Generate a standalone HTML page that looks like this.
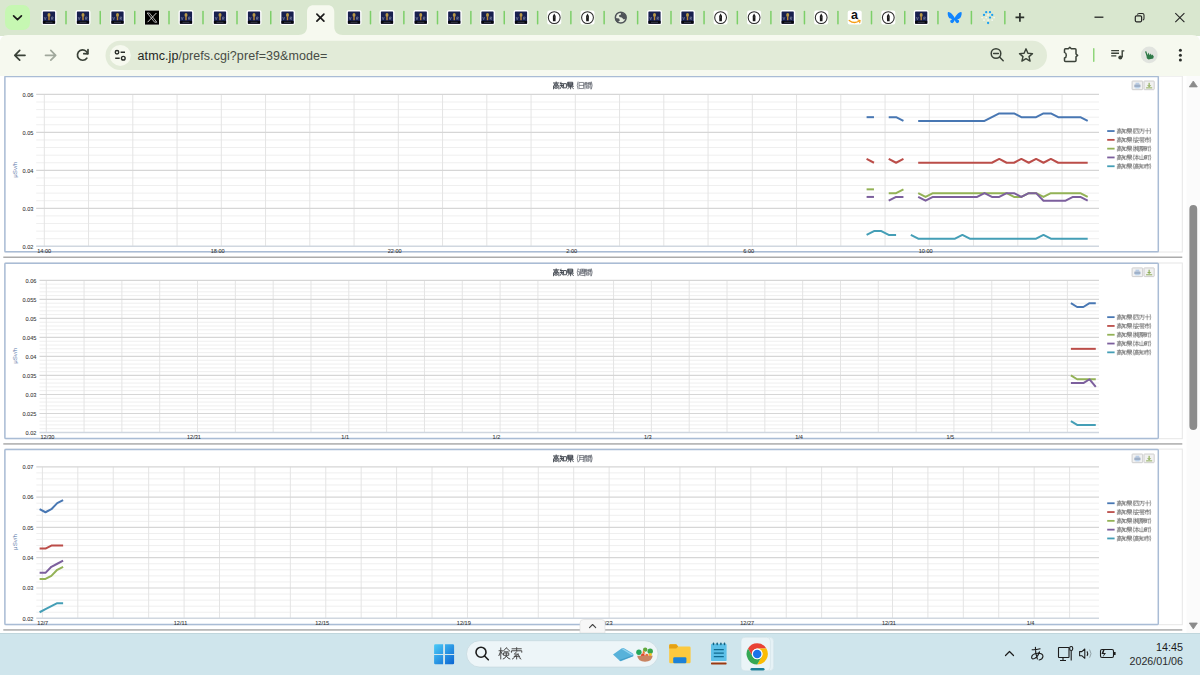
<!DOCTYPE html>
<html>
<head>
<meta charset="utf-8">
<style>
html,body{margin:0;padding:0;}
body{width:1200px;height:675px;overflow:hidden;position:relative;background:#fff;font-family:"Liberation Sans",sans-serif;}
.abs{position:absolute;}
#tabs{left:0;top:0;width:1200px;height:36px;background:#d9e7cf;}
#toolbar{left:0;top:35px;width:1200px;height:41px;background:#f6f9ef;border-radius:8px 8px 0 0;}
#content{left:0;top:76px;width:1200px;height:557px;background:#fff;overflow:hidden;}
#taskbar{left:0;top:633px;width:1200px;height:42px;overflow:hidden;}
svg text{font-family:"Liberation Sans",sans-serif;}
.tk{font-size:5.6px;fill:#3a3a3a;stroke:#3a3a3a;stroke-width:0.08px;}
.tt{font-size:7.4px;fill:#555;}
.yl{font-size:6.2px;fill:#5a78a8;}
.lg{font-size:5.6px;fill:#555;}
#url{left:138px;top:46px;font-size:14px;color:#1f1f1f;letter-spacing:0px;}
</style>
</head>
<body>
<div id="top" class="abs" style="left:0;top:0;width:1200px;height:76px"><svg width="1200" height="76" style="position:absolute;left:0;top:0">
<defs>
<g id="ic-v"><rect x="-7.5" y="-7.5" width="15" height="15" rx="2.5" fill="#fff"/><rect x="-6.1" y="-6.1" width="12.2" height="12.2" rx="0.6" fill="#18204f"/><rect x="-6.1" y="3.3" width="12.2" height="2.8" fill="#07070d"/><path d="M-3.5,4.7 L3.5,4.7" stroke="#6a7090" stroke-width="0.5"/><ellipse cx="0" cy="-2.6" rx="1.5" ry="1.9" fill="#b89848"/><rect x="-0.7" y="-1" width="1.4" height="3.6" fill="#c08a38"/><path d="M-4.8,-0.6 L-3.8,2.2 L-2.8,-0.6 M2.6,-0.6 L2.6,2.2 M2.6,-0.6 L4.1,-0.6 L4.1,0.8 L2.6,0.8 L4.3,2.2" stroke="#7c84a0" stroke-width="0.65" fill="none"/></g>
<g id="ic-x"><rect x="-7.5" y="-7.5" width="15" height="15" fill="#fff" opacity="0.7"/><rect x="-7" y="-7" width="14" height="14" fill="#000"/>
<path d="M-4.8,-4.6 L-2.6,-4.6 L4.8,4.6 L2.6,4.6 Z" fill="none" stroke="#ddd" stroke-width="0.8"/><path d="M4.4,-4.6 L-4.4,4.6" stroke="#ddd" stroke-width="0.9"/></g>
<g id="ic-p"><rect x="-7" y="-7" width="14" height="14" rx="2" fill="#fff"/><circle r="5.9" fill="none" stroke="#2a2a2a" stroke-width="1.05"/><path d="M0,-4.2 L1.4,-1.6 L1.3,3.6 L-1.3,3.6 L-1.4,-1.6 Z" fill="#1a1a1a"/><circle cx="0" cy="-0.6" r="0.45" fill="#888"/></g>
<g id="ic-g"><circle r="5.4" fill="#e4ecdc" stroke="#4f5458" stroke-width="1.5"/><path d="M0,-5.3 L5.4,-2.8 L5.6,0.9 L3,1.9 L1,0 L-1.4,-0.5 L-1.7,-2.4 L0.2,-3.2 Z" fill="#4f5458"/><path d="M-5.8,0.4 L-1.6,0.8 L-0.9,2.9 L-2.6,4.2 L-2.8,5.6 Q-5.4,4.2 -5.8,0.4 Z" fill="#4f5458"/></g>
<g id="ic-a"><rect x="-7" y="-7" width="14" height="14" rx="2" fill="#fff"/><text x="-0.3" y="1.1" text-anchor="middle" font-size="12.5" font-weight="bold" fill="#111" font-family="Liberation Sans">a</text><path d="M-5.5,2.8 Q-0.5,6.8 5,3.2" stroke="#f59d12" stroke-width="1.3" fill="none" stroke-linecap="round"/><path d="M3.2,2.4 L5.3,2.9 L5,5" stroke="#f59d12" stroke-width="1.1" fill="none" stroke-linecap="round"/></g>
<g id="ic-b"><path d="M0,0.5 C-1.5,-3 -5,-6 -6.5,-5.5 C-7.5,-5 -6.8,-1 -5.5,0.5 C-4.5,1.5 -3.5,1.5 -2.5,1.6 C-5,2.5 -5,4.5 -3,5.5 C-1.5,6 -0.5,4 0,2.5 C0.5,4 1.5,6 3,5.5 C5,4.5 5,2.5 2.5,1.6 C3.5,1.5 4.5,1.5 5.5,0.5 C6.8,-1 7.5,-5 6.5,-5.5 C5,-6 1.5,-3 0,0.5Z" fill="#1185fe"/></g>
<g id="ic-d"><circle cx="-1.9" cy="-5.4" r="1.15" fill="#1aa0f2"/><circle cx="1.9" cy="-5.4" r="1.15" fill="#1aa0f2"/><circle cx="-4.1" cy="-2.7" r="1.15" fill="#1aa0f2"/><circle cx="4.1" cy="-2.7" r="1.15" fill="#1aa0f2"/><circle cx="1.9" cy="0" r="1.15" fill="#1aa0f2"/><circle cx="0" cy="5.4" r="1.15" fill="#1aa0f2"/><circle cx="-6" cy="0" r="0.9" fill="#f4f8f0"/><circle cx="-1.9" cy="0" r="0.9" fill="#f4f8f0"/><circle cx="6" cy="0" r="0.9" fill="#f4f8f0"/><circle cx="-4.1" cy="2.5" r="0.9" fill="#f4f8f0"/><circle cx="0" cy="2.5" r="0.9" fill="#f4f8f0"/><circle cx="4.1" cy="2.5" r="0.9" fill="#f4f8f0"/><circle cx="0" cy="-2.7" r="0.9" fill="#f4f8f0"/></g>
</defs>
<rect x="0" y="0" width="1200" height="36" fill="#d9e7cf"/>
<rect x="5" y="5" width="25" height="25" rx="7" fill="#c6f7b2"/>
<path d="M13.6,15.8 L17.5,19.6 L21.4,15.8" stroke="#1b1b1b" stroke-width="1.7" fill="none" stroke-linecap="round" stroke-linejoin="round"/>
<rect x="65.25" y="10.7" width="1.5" height="13.8" rx="0.7" fill="#7ccf68"/>
<rect x="99.50" y="10.7" width="1.5" height="13.8" rx="0.7" fill="#7ccf68"/>
<rect x="134.00" y="10.7" width="1.5" height="13.8" rx="0.7" fill="#7ccf68"/>
<rect x="168.25" y="10.7" width="1.5" height="13.8" rx="0.7" fill="#7ccf68"/>
<rect x="202.25" y="10.7" width="1.5" height="13.8" rx="0.7" fill="#7ccf68"/>
<rect x="236.25" y="10.7" width="1.5" height="13.8" rx="0.7" fill="#7ccf68"/>
<rect x="270.00" y="10.7" width="1.5" height="13.8" rx="0.7" fill="#7ccf68"/>
<rect x="369.75" y="10.7" width="1.5" height="13.8" rx="0.7" fill="#7ccf68"/>
<rect x="403.12" y="10.7" width="1.5" height="13.8" rx="0.7" fill="#7ccf68"/>
<rect x="436.75" y="10.7" width="1.5" height="13.8" rx="0.7" fill="#7ccf68"/>
<rect x="470.12" y="10.7" width="1.5" height="13.8" rx="0.7" fill="#7ccf68"/>
<rect x="503.50" y="10.7" width="1.5" height="13.8" rx="0.7" fill="#7ccf68"/>
<rect x="536.88" y="10.7" width="1.5" height="13.8" rx="0.7" fill="#7ccf68"/>
<rect x="570.12" y="10.7" width="1.5" height="13.8" rx="0.7" fill="#7ccf68"/>
<rect x="603.38" y="10.7" width="1.5" height="13.8" rx="0.7" fill="#7ccf68"/>
<rect x="636.88" y="10.7" width="1.5" height="13.8" rx="0.7" fill="#7ccf68"/>
<rect x="670.25" y="10.7" width="1.5" height="13.8" rx="0.7" fill="#7ccf68"/>
<rect x="703.30" y="10.7" width="1.5" height="13.8" rx="0.7" fill="#7ccf68"/>
<rect x="736.60" y="10.7" width="1.5" height="13.8" rx="0.7" fill="#7ccf68"/>
<rect x="770.15" y="10.7" width="1.5" height="13.8" rx="0.7" fill="#7ccf68"/>
<rect x="803.70" y="10.7" width="1.5" height="13.8" rx="0.7" fill="#7ccf68"/>
<rect x="837.20" y="10.7" width="1.5" height="13.8" rx="0.7" fill="#7ccf68"/>
<rect x="870.75" y="10.7" width="1.5" height="13.8" rx="0.7" fill="#7ccf68"/>
<rect x="904.00" y="10.7" width="1.5" height="13.8" rx="0.7" fill="#7ccf68"/>
<rect x="937.20" y="10.7" width="1.5" height="13.8" rx="0.7" fill="#7ccf68"/>
<rect x="970.65" y="10.7" width="1.5" height="13.8" rx="0.7" fill="#7ccf68"/>
<rect x="1004.10" y="10.7" width="1.5" height="13.8" rx="0.7" fill="#7ccf68"/>
<path d="M298.5,35 C303.5,35 307,32 307,27 L307,12 C307,8 309.5,5.3 313.5,5.3 L327.8,5.3 C331.8,5.3 334.3,8 334.3,12 L334.3,27 C334.3,32 337.8,35 342.8,35 Z" fill="#f6f9ef"/>
<path d="M316.9,14.1 L323.9,21.1 M323.9,14.1 L316.9,21.1" stroke="#1b1b1b" stroke-width="1.7" stroke-linecap="round"/>
<use href="#ic-v" x="49" y="17.6"/>
<use href="#ic-v" x="83" y="17.6"/>
<use href="#ic-v" x="117.5" y="17.6"/>
<use href="#ic-x" x="152" y="17.6"/>
<use href="#ic-v" x="186" y="17.6"/>
<use href="#ic-v" x="220" y="17.6"/>
<use href="#ic-v" x="254" y="17.6"/>
<use href="#ic-v" x="287.5" y="17.6"/>
<use href="#ic-v" x="354" y="17.6"/>
<use href="#ic-v" x="387" y="17.6"/>
<use href="#ic-v" x="420.75" y="17.6"/>
<use href="#ic-v" x="454.25" y="17.6"/>
<use href="#ic-v" x="487.5" y="17.6"/>
<use href="#ic-v" x="521" y="17.6"/>
<use href="#ic-p" x="554.25" y="17.6"/>
<use href="#ic-p" x="587.5" y="17.6"/>
<use href="#ic-g" x="620.75" y="17.6"/>
<use href="#ic-v" x="654.5" y="17.6"/>
<use href="#ic-v" x="687.5" y="17.6"/>
<use href="#ic-p" x="720.6" y="17.6"/>
<use href="#ic-p" x="754.1" y="17.6"/>
<use href="#ic-v" x="787.7" y="17.6"/>
<use href="#ic-p" x="821.2" y="17.6"/>
<use href="#ic-a" x="854.7" y="17.6"/>
<use href="#ic-p" x="888.3" y="17.6"/>
<use href="#ic-v" x="921.2" y="17.6"/>
<use href="#ic-b" x="954.7" y="17.6"/>
<use href="#ic-d" x="988.1" y="17.6"/>
<path d="M1019.9,13.1 L1019.9,21.8 M1015.5,17.45 L1024.2,17.45" stroke="#2b302b" stroke-width="1.7"/>
<path d="M1094.5,17.2 L1103.4,17.2" stroke="#252525" stroke-width="1.3"/>
<rect x="1135.3" y="15.9" width="6.3" height="5.9" rx="1.2" fill="none" stroke="#252525" stroke-width="1.2"/><path d="M1137.3,14.7 Q1137.6,13.4 1139.2,13.4 L1142.4,13.4 Q1144,13.4 1144,15 L1144,18.4 Q1144,19.9 1142.8,20.1" stroke="#252525" stroke-width="1.05" fill="none"/>
<path d="M1175.3,13.2 L1184.4,22.1 M1184.4,13.2 L1175.3,22.1" stroke="#252525" stroke-width="1.1"/>
<path d="M0,76 L0,43 Q0,35 8,35 L1192,35 Q1200,35 1200,43 L1200,76 Z" fill="#f6f9ef"/>
<rect x="105.5" y="40.8" width="941.5" height="29.2" rx="14.6" fill="#e2ebd8"/>
<circle cx="120.3" cy="55.4" r="10.5" fill="#f6f9ef"/>
<g stroke="#2b2f2b" stroke-width="1.4" fill="none"><circle cx="117" cy="52.3" r="1.75"/><path d="M120.6,52.3 L125,52.3 M115.2,58.2 L119.7,58.2"/><circle cx="123.3" cy="58.2" r="1.85"/></g>
<text x="137.6" y="59.8" font-size="12.5" textLength="189.8" lengthAdjust="spacing" font-family="Liberation Sans" fill="#474b45"><tspan fill="#1f1f1f">atmc.jp</tspan>/prefs.cgi?pref=39&amp;mode=</text>
<path d="M25,55.3 L14.8,55.3 M19.7,50.4 L14.8,55.3 L19.7,60.2" stroke="#3a4238" stroke-width="1.7" fill="none" stroke-linecap="round" stroke-linejoin="round"/>
<path d="M45.5,55.3 L55.7,55.3 M50.8,50.4 L55.7,55.3 L50.8,60.2" stroke="#a0a89c" stroke-width="1.7" fill="none" stroke-linecap="round" stroke-linejoin="round"/>
<path d="M87.6,53.4 A5.2,5.2 0 1 0 86.8,58.2" stroke="#3a4238" stroke-width="1.7" fill="none" stroke-linecap="round"/><path d="M88,49.6 L87.9,53.9 L83.8,53.7" stroke="#3a4238" stroke-width="1.7" fill="none" stroke-linecap="round" stroke-linejoin="round"/>
<g stroke="#3a4238" stroke-width="1.5" fill="none" stroke-linecap="round"><circle cx="996" cy="53.5" r="4.8"/><path d="M993.6,53.5 L998.4,53.5 M999.5,57 L1003.2,60.8"/></g>
<path d="M1026,48.8 L1027.9,53.2 L1032.5,53.6 L1029,56.6 L1030.1,61.1 L1026,58.7 L1021.9,61.1 L1023,56.6 L1019.5,53.6 L1024.1,53.2 Z" fill="none" stroke="#3a4238" stroke-width="1.4" stroke-linejoin="round"/>
<path d="M1065.5,48.8 L1068.3,48.8 L1069.8,47.3 L1071.3,48.8 L1075,48.8 Q1076,48.8 1076,49.8 L1076,54 L1077.6,55.4 L1076,56.8 L1076,60.6 Q1076,61.6 1075,61.6 L1065.5,61.6 Q1064.5,61.6 1064.5,60.6 L1064.5,58 Q1066.3,57.5 1066.3,55.2 Q1066.3,52.9 1064.5,52.4 L1064.5,49.8 Q1064.5,48.8 1065.5,48.8 Z" fill="none" stroke="#3a4238" stroke-width="1.5" stroke-linejoin="round"/>
<rect x="1093" y="48" width="1.5" height="14" rx="0.7" fill="#8fd67a"/>
<g stroke="#3a4238" stroke-width="1.4" fill="none"><path d="M1111.2,50.6 L1119,50.6 M1111.2,53.25 L1119,53.25 M1111.2,55.9 L1116.3,55.9 M1122.2,57.2 L1122.2,50.9 L1124.3,50.9"/></g><circle cx="1120.3" cy="57.5" r="2" fill="#3a4238"/>
<circle cx="1149.25" cy="54.9" r="8.4" fill="#e1e4df"/><path d="M1145,51.6 L1146.3,51.2 L1147.6,55 L1148.6,52.6 L1149.6,55.2 L1150.8,53.6 L1151.6,55.6 L1152.4,54.6 L1153.8,56.6 L1153.2,58.6 L1148.6,59.4 L1147,58.6 Z" fill="#2f7a48"/><path d="M1144.6,52.8 L1146.2,56.5" stroke="#e8ece6" stroke-width="0.7"/>
<circle cx="1180.4" cy="50.3" r="1.5" fill="#2b2f2b"/><circle cx="1180.4" cy="55.15" r="1.5" fill="#2b2f2b"/><circle cx="1180.4" cy="60" r="1.5" fill="#2b2f2b"/>
</svg></div>
<div id="content" class="abs">
<svg width="1200" height="557" viewBox="0 76 1200 557" style="position:absolute;left:0;top:0">
<rect x="4.9" y="76.10000000000001" width="1177.4" height="175.89999999999998" fill="#fff" stroke="#e6e6e6" stroke-width="1"/>
<rect x="4.9" y="76.4" width="1153.3999999999999" height="175.29999999999998" rx="0.8" fill="#fff" stroke="#a9bcd5" stroke-width="1.5"/>
<line x1="36.2" y1="238.71" x2="1099" y2="238.71" stroke="#efefef" stroke-width="1"/>
<line x1="36.2" y1="231.11" x2="1099" y2="231.11" stroke="#efefef" stroke-width="1"/>
<line x1="36.2" y1="223.51" x2="1099" y2="223.51" stroke="#efefef" stroke-width="1"/>
<line x1="36.2" y1="215.92" x2="1099" y2="215.92" stroke="#efefef" stroke-width="1"/>
<line x1="36.2" y1="200.73" x2="1099" y2="200.73" stroke="#efefef" stroke-width="1"/>
<line x1="36.2" y1="193.13" x2="1099" y2="193.13" stroke="#efefef" stroke-width="1"/>
<line x1="36.2" y1="185.54" x2="1099" y2="185.54" stroke="#efefef" stroke-width="1"/>
<line x1="36.2" y1="177.94" x2="1099" y2="177.94" stroke="#efefef" stroke-width="1"/>
<line x1="36.2" y1="162.76" x2="1099" y2="162.76" stroke="#efefef" stroke-width="1"/>
<line x1="36.2" y1="155.16" x2="1099" y2="155.16" stroke="#efefef" stroke-width="1"/>
<line x1="36.2" y1="147.56" x2="1099" y2="147.56" stroke="#efefef" stroke-width="1"/>
<line x1="36.2" y1="139.97" x2="1099" y2="139.97" stroke="#efefef" stroke-width="1"/>
<line x1="36.2" y1="124.78" x2="1099" y2="124.78" stroke="#efefef" stroke-width="1"/>
<line x1="36.2" y1="117.18" x2="1099" y2="117.18" stroke="#efefef" stroke-width="1"/>
<line x1="36.2" y1="109.59" x2="1099" y2="109.59" stroke="#efefef" stroke-width="1"/>
<line x1="36.2" y1="102" x2="1099" y2="102" stroke="#efefef" stroke-width="1"/>
<line x1="44.3" y1="94.4" x2="44.3" y2="246.3" stroke="#e4e4e4" stroke-width="1"/>
<line x1="88.55" y1="94.4" x2="88.55" y2="246.3" stroke="#e4e4e4" stroke-width="1"/>
<line x1="132.8" y1="94.4" x2="132.8" y2="246.3" stroke="#e4e4e4" stroke-width="1"/>
<line x1="177.05" y1="94.4" x2="177.05" y2="246.3" stroke="#e4e4e4" stroke-width="1"/>
<line x1="221.3" y1="94.4" x2="221.3" y2="246.3" stroke="#e4e4e4" stroke-width="1"/>
<line x1="265.55" y1="94.4" x2="265.55" y2="246.3" stroke="#e4e4e4" stroke-width="1"/>
<line x1="309.8" y1="94.4" x2="309.8" y2="246.3" stroke="#e4e4e4" stroke-width="1"/>
<line x1="354.05" y1="94.4" x2="354.05" y2="246.3" stroke="#e4e4e4" stroke-width="1"/>
<line x1="398.3" y1="94.4" x2="398.3" y2="246.3" stroke="#e4e4e4" stroke-width="1"/>
<line x1="442.55" y1="94.4" x2="442.55" y2="246.3" stroke="#e4e4e4" stroke-width="1"/>
<line x1="486.8" y1="94.4" x2="486.8" y2="246.3" stroke="#e4e4e4" stroke-width="1"/>
<line x1="531.05" y1="94.4" x2="531.05" y2="246.3" stroke="#e4e4e4" stroke-width="1"/>
<line x1="575.3" y1="94.4" x2="575.3" y2="246.3" stroke="#e4e4e4" stroke-width="1"/>
<line x1="619.55" y1="94.4" x2="619.55" y2="246.3" stroke="#e4e4e4" stroke-width="1"/>
<line x1="663.8" y1="94.4" x2="663.8" y2="246.3" stroke="#e4e4e4" stroke-width="1"/>
<line x1="708.05" y1="94.4" x2="708.05" y2="246.3" stroke="#e4e4e4" stroke-width="1"/>
<line x1="752.3" y1="94.4" x2="752.3" y2="246.3" stroke="#e4e4e4" stroke-width="1"/>
<line x1="796.55" y1="94.4" x2="796.55" y2="246.3" stroke="#e4e4e4" stroke-width="1"/>
<line x1="840.8" y1="94.4" x2="840.8" y2="246.3" stroke="#e4e4e4" stroke-width="1"/>
<line x1="885.05" y1="94.4" x2="885.05" y2="246.3" stroke="#e4e4e4" stroke-width="1"/>
<line x1="929.3" y1="94.4" x2="929.3" y2="246.3" stroke="#e4e4e4" stroke-width="1"/>
<line x1="973.55" y1="94.4" x2="973.55" y2="246.3" stroke="#e4e4e4" stroke-width="1"/>
<line x1="1017.8" y1="94.4" x2="1017.8" y2="246.3" stroke="#e4e4e4" stroke-width="1"/>
<line x1="1062.05" y1="94.4" x2="1062.05" y2="246.3" stroke="#e4e4e4" stroke-width="1"/>
<line x1="36.2" y1="246.3" x2="1099" y2="246.3" stroke="#d0d7e0" stroke-width="1.5"/>
<text x="33.4" y="248.5" text-anchor="end" class="tk">0.02</text>
<line x1="36.2" y1="208.33" x2="1099" y2="208.33" stroke="#d6d6d6" stroke-width="1.2"/>
<text x="33.4" y="210.53" text-anchor="end" class="tk">0.03</text>
<line x1="36.2" y1="170.35" x2="1099" y2="170.35" stroke="#d6d6d6" stroke-width="1.2"/>
<text x="33.4" y="172.55" text-anchor="end" class="tk">0.04</text>
<line x1="36.2" y1="132.37" x2="1099" y2="132.37" stroke="#d6d6d6" stroke-width="1.2"/>
<text x="33.4" y="134.57" text-anchor="end" class="tk">0.05</text>
<line x1="36.2" y1="94.4" x2="1099" y2="94.4" stroke="#d6d6d6" stroke-width="1.2"/>
<text x="33.4" y="96.6" text-anchor="end" class="tk">0.06</text>
<text x="44.15" y="252.6" text-anchor="middle" class="tk">14:00</text>
<text x="217.7" y="252.6" text-anchor="middle" class="tk">18:00</text>
<text x="394.7" y="252.6" text-anchor="middle" class="tk">22:00</text>
<text x="571.7" y="252.6" text-anchor="middle" class="tk">2:00</text>
<text x="748.7" y="252.6" text-anchor="middle" class="tk">6:00</text>
<text x="925.7" y="252.6" text-anchor="middle" class="tk">10:00</text>
<g fill="none" stroke="#3a3f48" stroke-linecap="round" stroke-linejoin="round"><path d="M1,1.5 L9,1.5 M5,0 L5,1.5 M3,2.8 L7,2.8 L7,4.3 L3,4.3 Z M1.2,10 L1.2,5.5 L8.8,5.5 L8.8,10 M3.5,7 L6.5,7 L6.5,9 L3.5,9 Z" transform="translate(552.70,81.90) scale(0.7000)" stroke-width="1.286"/><path d="M1.5,0.5 L0.8,3 M1,2.5 L4.5,2.5 M0.3,5.2 L4.8,5.2 M2.7,2.5 L2.7,5.5 L0.5,9.5 M2.8,6 L4.5,9 M5.8,2.5 L9.3,2.5 L9.3,8.5 L5.8,8.5 Z" transform="translate(559.90,81.90) scale(0.7000)" stroke-width="1.286"/><path d="M2,0.5 L8,0.5 L8,5 L2,5 Z M2,2 L8,2 M2,3.5 L8,3.5 M1,0.5 L1,6.3 L9,6.3 M5,6.3 L5,10 M3.5,7.5 L1,9.5 M6.5,7.5 L9,9.5" transform="translate(567.10,81.90) scale(0.7000)" stroke-width="1.286"/></g>
<g fill="none" stroke="#5a5f68" stroke-linecap="round" stroke-linejoin="round"><path d="M577.94,81.90 Q576.40,85.40 577.94,88.90" stroke-width="0.700"/><path d="M2,0.8 L8,0.8 L8,9.5 L2,9.5 Z M2,5 L8,5" transform="translate(578.04,81.90) scale(0.7000)" stroke-width="1.000"/><path d="M0.8,10 L0.8,0.8 L4,0.8 L4,4 L0.8,4 M0.8,2.4 L4,2.4 M9.2,10 L9.2,0.8 L6,0.8 L6,4 L9.2,4 M6,2.4 L9.2,2.4 M3.3,5.5 L6.7,5.5 L6.7,9 L3.3,9 Z M3.3,7.2 L6.7,7.2" transform="translate(584.36,81.90) scale(0.7000)" stroke-width="1.000"/><path d="M591.46,81.90 Q593.00,85.40 591.46,88.90" stroke-width="0.700"/></g>
<text x="0" y="0" transform="translate(17.1,169.75) rotate(-90)" text-anchor="middle" class="yl">μSv/h</text>
<polyline points="866.6,117.18 873.97,117.18" fill="none" stroke="#4877b3" stroke-width="2" stroke-linejoin="round"/>
<polyline points="888.71,117.18 896.08,117.18 903.45,120.98" fill="none" stroke="#4877b3" stroke-width="2" stroke-linejoin="round"/>
<polyline points="918.19,120.98 925.56,120.98 932.93,120.98 940.3,120.98 947.67,120.98 955.04,120.98 962.41,120.98 969.78,120.98 977.15,120.98 984.52,120.98 991.89,117.18 999.26,113.39 1006.63,113.39 1014,113.39 1021.37,117.18 1028.74,117.18 1036.11,117.18 1043.48,113.39 1050.85,113.39 1058.22,117.18 1065.59,117.18 1072.96,117.18 1080.33,117.18 1087.7,120.98" fill="none" stroke="#4877b3" stroke-width="2" stroke-linejoin="round"/>
<polyline points="866.6,158.96 873.97,162.75" fill="none" stroke="#bb4d49" stroke-width="2" stroke-linejoin="round"/>
<polyline points="888.71,158.96 896.08,162.75 903.45,158.96" fill="none" stroke="#bb4d49" stroke-width="2" stroke-linejoin="round"/>
<polyline points="918.19,162.75 925.56,162.75 932.93,162.75 940.3,162.75 947.67,162.75 955.04,162.75 962.41,162.75 969.78,162.75 977.15,162.75 984.52,162.75 991.89,162.75 999.26,158.96 1006.63,162.75 1014,162.75 1021.37,158.96 1028.74,162.75 1036.11,158.96 1043.48,162.75 1050.85,158.96 1058.22,162.75 1065.59,162.75 1072.96,162.75 1080.33,162.75 1087.7,162.75" fill="none" stroke="#bb4d49" stroke-width="2" stroke-linejoin="round"/>
<polyline points="866.6,189.34 873.97,189.34" fill="none" stroke="#93b256" stroke-width="2" stroke-linejoin="round"/>
<polyline points="888.71,193.13 896.08,193.13 903.45,189.34" fill="none" stroke="#93b256" stroke-width="2" stroke-linejoin="round"/>
<polyline points="918.19,193.13 925.56,196.93 932.93,193.13 940.3,193.13 947.67,193.13 955.04,193.13 962.41,193.13 969.78,193.13 977.15,193.13 984.52,193.13 991.89,193.13 999.26,193.13 1006.63,193.13 1014,196.93 1021.37,196.93 1028.74,193.13 1036.11,193.13 1043.48,196.93 1050.85,193.13 1058.22,193.13 1065.59,193.13 1072.96,193.13 1080.33,193.13 1087.7,196.93" fill="none" stroke="#93b256" stroke-width="2" stroke-linejoin="round"/>
<polyline points="866.6,196.93 873.97,196.93" fill="none" stroke="#7c5f9d" stroke-width="2" stroke-linejoin="round"/>
<polyline points="888.71,200.73 896.08,196.93 903.45,196.93" fill="none" stroke="#7c5f9d" stroke-width="2" stroke-linejoin="round"/>
<polyline points="918.19,196.93 925.56,200.73 932.93,196.93 940.3,196.93 947.67,196.93 955.04,196.93 962.41,196.93 969.78,196.93 977.15,196.93 984.52,193.13 991.89,196.93 999.26,196.93 1006.63,193.13 1014,193.13 1021.37,196.93 1028.74,193.13 1036.11,193.13 1043.48,200.73 1050.85,200.73 1058.22,200.73 1065.59,200.73 1072.96,196.93 1080.33,196.93 1087.7,200.73" fill="none" stroke="#7c5f9d" stroke-width="2" stroke-linejoin="round"/>
<polyline points="866.6,234.91 873.97,231.11 881.34,231.11 888.71,234.91 896.08,234.91" fill="none" stroke="#449eb6" stroke-width="2" stroke-linejoin="round"/>
<polyline points="910.82,234.91 918.19,238.71 925.56,238.71 932.93,238.71 940.3,238.71 947.67,238.71 955.04,238.71 962.41,234.91 969.78,238.71 977.15,238.71 984.52,238.71 991.89,238.71 999.26,238.71 1006.63,238.71 1014,238.71 1021.37,238.71 1028.74,238.71 1036.11,238.71 1043.48,234.91 1050.85,238.71 1058.22,238.71 1065.59,238.71 1072.96,238.71 1080.33,238.71 1087.7,238.71" fill="none" stroke="#449eb6" stroke-width="2" stroke-linejoin="round"/>
<line x1="1107.2" y1="131.05" x2="1114.6" y2="131.05" stroke="#4877b3" stroke-width="1.8"/>
<g fill="none" stroke="#626262" stroke-linecap="round" stroke-linejoin="round"><path d="M1,1.5 L9,1.5 M5,0 L5,1.5 M3,2.8 L7,2.8 L7,4.3 L3,4.3 Z M1.2,10 L1.2,5.5 L8.8,5.5 L8.8,10 M3.5,7 L6.5,7 L6.5,9 L3.5,9 Z" transform="translate(1116.75,128.35) scale(0.5300)" stroke-width="1.038"/><path d="M1.5,0.5 L0.8,3 M1,2.5 L4.5,2.5 M0.3,5.2 L4.8,5.2 M2.7,2.5 L2.7,5.5 L0.5,9.5 M2.8,6 L4.5,9 M5.8,2.5 L9.3,2.5 L9.3,8.5 L5.8,8.5 Z" transform="translate(1121.94,128.35) scale(0.5300)" stroke-width="1.038"/><path d="M2,0.5 L8,0.5 L8,5 L2,5 Z M2,2 L8,2 M2,3.5 L8,3.5 M1,0.5 L1,6.3 L9,6.3 M5,6.3 L5,10 M3.5,7.5 L1,9.5 M6.5,7.5 L9,9.5" transform="translate(1127.13,128.35) scale(0.5300)" stroke-width="1.038"/><path d="M1133.85,128.35 Q1132.68,131.00 1133.85,133.65" stroke-width="0.550"/><path d="M1,1 L9,1 L9,9 L1,9 Z M3.8,1 Q3.8,5 2,6.5 M6,1 L6,5.5 Q6,6.5 8,6.5" transform="translate(1134.20,128.35) scale(0.5300)" stroke-width="1.038"/><path d="M0.5,1.5 L9.5,1.5 M4,1.5 L3.5,5 Q2.5,8.5 0.5,10 M3.7,4.5 L8.5,4.5 Q8.5,9 7.5,10 L6,9.5" transform="translate(1139.39,128.35) scale(0.5300)" stroke-width="1.038"/><path d="M0.5,4.5 L9.5,4.5 M5,0.3 L5,10" transform="translate(1144.58,128.35) scale(0.5300)" stroke-width="1.038"/><path d="M1150.24,128.35 Q1151.40,131.00 1150.24,133.65" stroke-width="0.550"/></g>
<line x1="1107.2" y1="139.85" x2="1114.6" y2="139.85" stroke="#bb4d49" stroke-width="1.8"/>
<g fill="none" stroke="#626262" stroke-linecap="round" stroke-linejoin="round"><path d="M1,1.5 L9,1.5 M5,0 L5,1.5 M3,2.8 L7,2.8 L7,4.3 L3,4.3 Z M1.2,10 L1.2,5.5 L8.8,5.5 L8.8,10 M3.5,7 L6.5,7 L6.5,9 L3.5,9 Z" transform="translate(1116.75,137.15) scale(0.5300)" stroke-width="1.038"/><path d="M1.5,0.5 L0.8,3 M1,2.5 L4.5,2.5 M0.3,5.2 L4.8,5.2 M2.7,2.5 L2.7,5.5 L0.5,9.5 M2.8,6 L4.5,9 M5.8,2.5 L9.3,2.5 L9.3,8.5 L5.8,8.5 Z" transform="translate(1121.94,137.15) scale(0.5300)" stroke-width="1.038"/><path d="M2,0.5 L8,0.5 L8,5 L2,5 Z M2,2 L8,2 M2,3.5 L8,3.5 M1,0.5 L1,6.3 L9,6.3 M5,6.3 L5,10 M3.5,7.5 L1,9.5 M6.5,7.5 L9,9.5" transform="translate(1127.13,137.15) scale(0.5300)" stroke-width="1.038"/><path d="M1133.85,137.15 Q1132.68,139.80 1133.85,142.45" stroke-width="0.550"/><path d="M5,0 L5,1.3 M1,3.5 L1,1.8 L9,1.8 L9,3.5 M0.5,6 L9.5,6 M4,3.5 Q3.5,6 2,9.5 Q6,8 8.5,10 M7,6 Q6.5,9 2,10" transform="translate(1134.20,137.15) scale(0.5300)" stroke-width="1.038"/><path d="M0.5,1.5 L9.5,1.5 M3,0.3 L3,2.8 M7,0.3 L7,2.8 M2,4 L8,4 M0.8,6 L9.2,6 M4.5,6 L2,9.5 L8,9 M6.5,7.5 L8.5,10" transform="translate(1139.39,137.15) scale(0.5300)" stroke-width="1.038"/><path d="M5,0 L5,1.5 M0.5,2 L9.5,2 M1.5,4 L1.5,8.5 M1.5,4 L8.5,4 L8.5,8 L7.5,8.5 M5,2 L5,10" transform="translate(1144.58,137.15) scale(0.5300)" stroke-width="1.038"/><path d="M1150.24,137.15 Q1151.40,139.80 1150.24,142.45" stroke-width="0.550"/></g>
<line x1="1107.2" y1="148.65" x2="1114.6" y2="148.65" stroke="#93b256" stroke-width="1.8"/>
<g fill="none" stroke="#626262" stroke-linecap="round" stroke-linejoin="round"><path d="M1,1.5 L9,1.5 M5,0 L5,1.5 M3,2.8 L7,2.8 L7,4.3 L3,4.3 Z M1.2,10 L1.2,5.5 L8.8,5.5 L8.8,10 M3.5,7 L6.5,7 L6.5,9 L3.5,9 Z" transform="translate(1116.75,145.95) scale(0.5300)" stroke-width="1.038"/><path d="M1.5,0.5 L0.8,3 M1,2.5 L4.5,2.5 M0.3,5.2 L4.8,5.2 M2.7,2.5 L2.7,5.5 L0.5,9.5 M2.8,6 L4.5,9 M5.8,2.5 L9.3,2.5 L9.3,8.5 L5.8,8.5 Z" transform="translate(1121.94,145.95) scale(0.5300)" stroke-width="1.038"/><path d="M2,0.5 L8,0.5 L8,5 L2,5 Z M2,2 L8,2 M2,3.5 L8,3.5 M1,0.5 L1,6.3 L9,6.3 M5,6.3 L5,10 M3.5,7.5 L1,9.5 M6.5,7.5 L9,9.5" transform="translate(1127.13,145.95) scale(0.5300)" stroke-width="1.038"/><path d="M1133.85,145.95 Q1132.68,148.60 1133.85,151.25" stroke-width="0.550"/><path d="M0.5,3 L4,3 M2.2,0.3 L2.2,10 M2.2,3.5 L0.3,8 M2.4,4 L4,6.5 M4.8,1.5 L9.5,1.5 M4.8,3.5 L9.5,3.5 M4.5,5.5 L9.8,5.5 M7,0.3 L7,7 M5,7.5 L9.5,7.5 L9,10 L8,9.8 M6,8.5 L6.8,9.5" transform="translate(1134.20,145.95) scale(0.5300)" stroke-width="1.038"/><path d="M1,1 L9.5,1 M1.8,1 L1.8,6 Q1.5,9 0.3,10 M5,1 L4.5,2.5 M3.5,2.5 L8.5,2.5 L8.5,6.5 L3.5,6.5 Z M3.5,4.5 L8.5,4.5 M6,6.5 L6,10 L5,9.6 M4,8 L3,9.5 M8,8 L9.3,9.5" transform="translate(1139.39,145.95) scale(0.5300)" stroke-width="1.038"/><path d="M0.8,1.5 L4,1.5 L4,8 L0.8,8 Z M0.8,4.8 L4,4.8 M2.4,1.5 L2.4,8 M5,2 L9.5,2 M7.8,2 L7.8,9.5 L6.8,9.2" transform="translate(1144.58,145.95) scale(0.5300)" stroke-width="1.038"/><path d="M1150.24,145.95 Q1151.40,148.60 1150.24,151.25" stroke-width="0.550"/></g>
<line x1="1107.2" y1="157.45" x2="1114.6" y2="157.45" stroke="#7c5f9d" stroke-width="1.8"/>
<g fill="none" stroke="#626262" stroke-linecap="round" stroke-linejoin="round"><path d="M1,1.5 L9,1.5 M5,0 L5,1.5 M3,2.8 L7,2.8 L7,4.3 L3,4.3 Z M1.2,10 L1.2,5.5 L8.8,5.5 L8.8,10 M3.5,7 L6.5,7 L6.5,9 L3.5,9 Z" transform="translate(1116.75,154.75) scale(0.5300)" stroke-width="1.038"/><path d="M1.5,0.5 L0.8,3 M1,2.5 L4.5,2.5 M0.3,5.2 L4.8,5.2 M2.7,2.5 L2.7,5.5 L0.5,9.5 M2.8,6 L4.5,9 M5.8,2.5 L9.3,2.5 L9.3,8.5 L5.8,8.5 Z" transform="translate(1121.94,154.75) scale(0.5300)" stroke-width="1.038"/><path d="M2,0.5 L8,0.5 L8,5 L2,5 Z M2,2 L8,2 M2,3.5 L8,3.5 M1,0.5 L1,6.3 L9,6.3 M5,6.3 L5,10 M3.5,7.5 L1,9.5 M6.5,7.5 L9,9.5" transform="translate(1127.13,154.75) scale(0.5300)" stroke-width="1.038"/><path d="M1133.85,154.75 Q1132.68,157.40 1133.85,160.05" stroke-width="0.550"/><path d="M0.5,2.5 L9.5,2.5 M5,0.3 L5,10 M4.7,3 L0.5,8.5 M5.3,3 L9.5,8.5 M2.8,7.5 L7.2,7.5" transform="translate(1134.20,154.75) scale(0.5300)" stroke-width="1.038"/><path d="M5,0.5 L5,9 M1,3 L1,9 L9,9 L9,3" transform="translate(1139.39,154.75) scale(0.5300)" stroke-width="1.038"/><path d="M0.8,1.5 L4,1.5 L4,8 L0.8,8 Z M0.8,4.8 L4,4.8 M2.4,1.5 L2.4,8 M5,2 L9.5,2 M7.8,2 L7.8,9.5 L6.8,9.2" transform="translate(1144.58,154.75) scale(0.5300)" stroke-width="1.038"/><path d="M1150.24,154.75 Q1151.40,157.40 1150.24,160.05" stroke-width="0.550"/></g>
<line x1="1107.2" y1="166.25" x2="1114.6" y2="166.25" stroke="#449eb6" stroke-width="1.8"/>
<g fill="none" stroke="#626262" stroke-linecap="round" stroke-linejoin="round"><path d="M1,1.5 L9,1.5 M5,0 L5,1.5 M3,2.8 L7,2.8 L7,4.3 L3,4.3 Z M1.2,10 L1.2,5.5 L8.8,5.5 L8.8,10 M3.5,7 L6.5,7 L6.5,9 L3.5,9 Z" transform="translate(1116.75,163.55) scale(0.5300)" stroke-width="1.038"/><path d="M1.5,0.5 L0.8,3 M1,2.5 L4.5,2.5 M0.3,5.2 L4.8,5.2 M2.7,2.5 L2.7,5.5 L0.5,9.5 M2.8,6 L4.5,9 M5.8,2.5 L9.3,2.5 L9.3,8.5 L5.8,8.5 Z" transform="translate(1121.94,163.55) scale(0.5300)" stroke-width="1.038"/><path d="M2,0.5 L8,0.5 L8,5 L2,5 Z M2,2 L8,2 M2,3.5 L8,3.5 M1,0.5 L1,6.3 L9,6.3 M5,6.3 L5,10 M3.5,7.5 L1,9.5 M6.5,7.5 L9,9.5" transform="translate(1127.13,163.55) scale(0.5300)" stroke-width="1.038"/><path d="M1133.85,163.55 Q1132.68,166.20 1133.85,168.85" stroke-width="0.550"/><path d="M1,1.5 L9,1.5 M5,0 L5,1.5 M3,2.8 L7,2.8 L7,4.3 L3,4.3 Z M1.2,10 L1.2,5.5 L8.8,5.5 L8.8,10 M3.5,7 L6.5,7 L6.5,9 L3.5,9 Z" transform="translate(1134.20,163.55) scale(0.5300)" stroke-width="1.038"/><path d="M1.5,0.5 L0.8,3 M1,2.5 L4.5,2.5 M0.3,5.2 L4.8,5.2 M2.7,2.5 L2.7,5.5 L0.5,9.5 M2.8,6 L4.5,9 M5.8,2.5 L9.3,2.5 L9.3,8.5 L5.8,8.5 Z" transform="translate(1139.39,163.55) scale(0.5300)" stroke-width="1.038"/><path d="M5,0 L5,1.5 M0.5,2 L9.5,2 M1.5,4 L1.5,8.5 M1.5,4 L8.5,4 L8.5,8 L7.5,8.5 M5,2 L5,10" transform="translate(1144.58,163.55) scale(0.5300)" stroke-width="1.038"/><path d="M1150.24,163.55 Q1151.40,166.20 1150.24,168.85" stroke-width="0.550"/></g>
<rect x="1132.1" y="81" width="10.6" height="8.7" rx="0.6" fill="#f1f1f1" stroke="#cbcbcb" stroke-width="0.9"/>
<rect x="1135.5" y="82.7" width="3.8" height="2" fill="#b9cde6"/><rect x="1134.3" y="84.6" width="6.2" height="2.7" rx="0.4" fill="#9fb0c8"/><rect x="1135.3" y="87" width="4.2" height="1.4" fill="#bcd3ec"/>
<rect x="1144.0" y="81" width="10.2" height="8.7" rx="0.6" fill="#f1f1f1" stroke="#cbcbcb" stroke-width="0.9"/>
<rect x="1148.5" y="82.8" width="1.3" height="2.6" fill="#9ab46a"/><path d="M1147,85.2 L1151.3,85.2 L1149.15,87.2 Z" fill="#8fae5a"/><rect x="1146.1" y="87.3" width="6.1" height="1.1" fill="#9ab46a"/>
<rect x="3.3" y="256.55" width="1179" height="1.35" fill="#a2a2a2"/>
<rect x="4.9" y="263.0" width="1177.4" height="175.69999999999996" fill="#fff" stroke="#e6e6e6" stroke-width="1"/>
<rect x="4.9" y="263.3" width="1153.3999999999999" height="175.09999999999997" rx="0.8" fill="#fff" stroke="#a9bcd5" stroke-width="1.5"/>
<line x1="39.5" y1="428.7" x2="1099" y2="428.7" stroke="#efefef" stroke-width="1"/>
<line x1="39.5" y1="424.89" x2="1099" y2="424.89" stroke="#efefef" stroke-width="1"/>
<line x1="39.5" y1="421.09" x2="1099" y2="421.09" stroke="#efefef" stroke-width="1"/>
<line x1="39.5" y1="417.29" x2="1099" y2="417.29" stroke="#efefef" stroke-width="1"/>
<line x1="39.5" y1="409.69" x2="1099" y2="409.69" stroke="#efefef" stroke-width="1"/>
<line x1="39.5" y1="405.88" x2="1099" y2="405.88" stroke="#efefef" stroke-width="1"/>
<line x1="39.5" y1="402.08" x2="1099" y2="402.08" stroke="#efefef" stroke-width="1"/>
<line x1="39.5" y1="398.28" x2="1099" y2="398.28" stroke="#efefef" stroke-width="1"/>
<line x1="39.5" y1="390.67" x2="1099" y2="390.67" stroke="#efefef" stroke-width="1"/>
<line x1="39.5" y1="386.87" x2="1099" y2="386.87" stroke="#efefef" stroke-width="1"/>
<line x1="39.5" y1="383.07" x2="1099" y2="383.07" stroke="#efefef" stroke-width="1"/>
<line x1="39.5" y1="379.26" x2="1099" y2="379.26" stroke="#efefef" stroke-width="1"/>
<line x1="39.5" y1="371.66" x2="1099" y2="371.66" stroke="#efefef" stroke-width="1"/>
<line x1="39.5" y1="367.86" x2="1099" y2="367.86" stroke="#efefef" stroke-width="1"/>
<line x1="39.5" y1="364.05" x2="1099" y2="364.05" stroke="#efefef" stroke-width="1"/>
<line x1="39.5" y1="360.25" x2="1099" y2="360.25" stroke="#efefef" stroke-width="1"/>
<line x1="39.5" y1="352.65" x2="1099" y2="352.65" stroke="#efefef" stroke-width="1"/>
<line x1="39.5" y1="348.85" x2="1099" y2="348.85" stroke="#efefef" stroke-width="1"/>
<line x1="39.5" y1="345.04" x2="1099" y2="345.04" stroke="#efefef" stroke-width="1"/>
<line x1="39.5" y1="341.24" x2="1099" y2="341.24" stroke="#efefef" stroke-width="1"/>
<line x1="39.5" y1="333.63" x2="1099" y2="333.63" stroke="#efefef" stroke-width="1"/>
<line x1="39.5" y1="329.83" x2="1099" y2="329.83" stroke="#efefef" stroke-width="1"/>
<line x1="39.5" y1="326.03" x2="1099" y2="326.03" stroke="#efefef" stroke-width="1"/>
<line x1="39.5" y1="322.23" x2="1099" y2="322.23" stroke="#efefef" stroke-width="1"/>
<line x1="39.5" y1="314.62" x2="1099" y2="314.62" stroke="#efefef" stroke-width="1"/>
<line x1="39.5" y1="310.82" x2="1099" y2="310.82" stroke="#efefef" stroke-width="1"/>
<line x1="39.5" y1="307.02" x2="1099" y2="307.02" stroke="#efefef" stroke-width="1"/>
<line x1="39.5" y1="303.21" x2="1099" y2="303.21" stroke="#efefef" stroke-width="1"/>
<line x1="39.5" y1="295.61" x2="1099" y2="295.61" stroke="#efefef" stroke-width="1"/>
<line x1="39.5" y1="291.81" x2="1099" y2="291.81" stroke="#efefef" stroke-width="1"/>
<line x1="39.5" y1="288" x2="1099" y2="288" stroke="#efefef" stroke-width="1"/>
<line x1="39.5" y1="284.2" x2="1099" y2="284.2" stroke="#efefef" stroke-width="1"/>
<line x1="46.25" y1="280.4" x2="46.25" y2="432.5" stroke="#e4e4e4" stroke-width="1"/>
<line x1="84.07" y1="280.4" x2="84.07" y2="432.5" stroke="#e4e4e4" stroke-width="1"/>
<line x1="121.89" y1="280.4" x2="121.89" y2="432.5" stroke="#e4e4e4" stroke-width="1"/>
<line x1="159.71" y1="280.4" x2="159.71" y2="432.5" stroke="#e4e4e4" stroke-width="1"/>
<line x1="197.53" y1="280.4" x2="197.53" y2="432.5" stroke="#e4e4e4" stroke-width="1"/>
<line x1="235.35" y1="280.4" x2="235.35" y2="432.5" stroke="#e4e4e4" stroke-width="1"/>
<line x1="273.17" y1="280.4" x2="273.17" y2="432.5" stroke="#e4e4e4" stroke-width="1"/>
<line x1="310.99" y1="280.4" x2="310.99" y2="432.5" stroke="#e4e4e4" stroke-width="1"/>
<line x1="348.81" y1="280.4" x2="348.81" y2="432.5" stroke="#e4e4e4" stroke-width="1"/>
<line x1="386.63" y1="280.4" x2="386.63" y2="432.5" stroke="#e4e4e4" stroke-width="1"/>
<line x1="424.45" y1="280.4" x2="424.45" y2="432.5" stroke="#e4e4e4" stroke-width="1"/>
<line x1="462.27" y1="280.4" x2="462.27" y2="432.5" stroke="#e4e4e4" stroke-width="1"/>
<line x1="500.09" y1="280.4" x2="500.09" y2="432.5" stroke="#e4e4e4" stroke-width="1"/>
<line x1="537.91" y1="280.4" x2="537.91" y2="432.5" stroke="#e4e4e4" stroke-width="1"/>
<line x1="575.73" y1="280.4" x2="575.73" y2="432.5" stroke="#e4e4e4" stroke-width="1"/>
<line x1="613.55" y1="280.4" x2="613.55" y2="432.5" stroke="#e4e4e4" stroke-width="1"/>
<line x1="651.37" y1="280.4" x2="651.37" y2="432.5" stroke="#e4e4e4" stroke-width="1"/>
<line x1="689.19" y1="280.4" x2="689.19" y2="432.5" stroke="#e4e4e4" stroke-width="1"/>
<line x1="727.01" y1="280.4" x2="727.01" y2="432.5" stroke="#e4e4e4" stroke-width="1"/>
<line x1="764.83" y1="280.4" x2="764.83" y2="432.5" stroke="#e4e4e4" stroke-width="1"/>
<line x1="802.65" y1="280.4" x2="802.65" y2="432.5" stroke="#e4e4e4" stroke-width="1"/>
<line x1="840.47" y1="280.4" x2="840.47" y2="432.5" stroke="#e4e4e4" stroke-width="1"/>
<line x1="878.29" y1="280.4" x2="878.29" y2="432.5" stroke="#e4e4e4" stroke-width="1"/>
<line x1="916.11" y1="280.4" x2="916.11" y2="432.5" stroke="#e4e4e4" stroke-width="1"/>
<line x1="953.93" y1="280.4" x2="953.93" y2="432.5" stroke="#e4e4e4" stroke-width="1"/>
<line x1="991.75" y1="280.4" x2="991.75" y2="432.5" stroke="#e4e4e4" stroke-width="1"/>
<line x1="1029.57" y1="280.4" x2="1029.57" y2="432.5" stroke="#e4e4e4" stroke-width="1"/>
<line x1="1067.39" y1="280.4" x2="1067.39" y2="432.5" stroke="#e4e4e4" stroke-width="1"/>
<line x1="39.5" y1="432.5" x2="1099" y2="432.5" stroke="#d0d7e0" stroke-width="1.5"/>
<text x="36.4" y="434.7" text-anchor="end" class="tk">0.02</text>
<line x1="39.5" y1="413.49" x2="1099" y2="413.49" stroke="#d6d6d6" stroke-width="1.2"/>
<text x="36.4" y="415.69" text-anchor="end" class="tk">0.025</text>
<line x1="39.5" y1="394.48" x2="1099" y2="394.48" stroke="#d6d6d6" stroke-width="1.2"/>
<text x="36.4" y="396.68" text-anchor="end" class="tk">0.03</text>
<line x1="39.5" y1="375.46" x2="1099" y2="375.46" stroke="#d6d6d6" stroke-width="1.2"/>
<text x="36.4" y="377.66" text-anchor="end" class="tk">0.035</text>
<line x1="39.5" y1="356.45" x2="1099" y2="356.45" stroke="#d6d6d6" stroke-width="1.2"/>
<text x="36.4" y="358.65" text-anchor="end" class="tk">0.04</text>
<line x1="39.5" y1="337.44" x2="1099" y2="337.44" stroke="#d6d6d6" stroke-width="1.2"/>
<text x="36.4" y="339.64" text-anchor="end" class="tk">0.045</text>
<line x1="39.5" y1="318.42" x2="1099" y2="318.42" stroke="#d6d6d6" stroke-width="1.2"/>
<text x="36.4" y="320.62" text-anchor="end" class="tk">0.05</text>
<line x1="39.5" y1="299.41" x2="1099" y2="299.41" stroke="#d6d6d6" stroke-width="1.2"/>
<text x="36.4" y="301.61" text-anchor="end" class="tk">0.055</text>
<line x1="39.5" y1="280.4" x2="1099" y2="280.4" stroke="#d6d6d6" stroke-width="1.2"/>
<text x="36.4" y="282.6" text-anchor="end" class="tk">0.06</text>
<text x="47.45" y="438.8" text-anchor="middle" class="tk">12/30</text>
<text x="193.93" y="438.8" text-anchor="middle" class="tk">12/31</text>
<text x="345.21" y="438.8" text-anchor="middle" class="tk">1/1</text>
<text x="496.49" y="438.8" text-anchor="middle" class="tk">1/2</text>
<text x="647.77" y="438.8" text-anchor="middle" class="tk">1/3</text>
<text x="799.05" y="438.8" text-anchor="middle" class="tk">1/4</text>
<text x="950.33" y="438.8" text-anchor="middle" class="tk">1/5</text>
<g fill="none" stroke="#3a3f48" stroke-linecap="round" stroke-linejoin="round"><path d="M1,1.5 L9,1.5 M5,0 L5,1.5 M3,2.8 L7,2.8 L7,4.3 L3,4.3 Z M1.2,10 L1.2,5.5 L8.8,5.5 L8.8,10 M3.5,7 L6.5,7 L6.5,9 L3.5,9 Z" transform="translate(552.70,268.80) scale(0.7000)" stroke-width="1.286"/><path d="M1.5,0.5 L0.8,3 M1,2.5 L4.5,2.5 M0.3,5.2 L4.8,5.2 M2.7,2.5 L2.7,5.5 L0.5,9.5 M2.8,6 L4.5,9 M5.8,2.5 L9.3,2.5 L9.3,8.5 L5.8,8.5 Z" transform="translate(559.90,268.80) scale(0.7000)" stroke-width="1.286"/><path d="M2,0.5 L8,0.5 L8,5 L2,5 Z M2,2 L8,2 M2,3.5 L8,3.5 M1,0.5 L1,6.3 L9,6.3 M5,6.3 L5,10 M3.5,7.5 L1,9.5 M6.5,7.5 L9,9.5" transform="translate(567.10,268.80) scale(0.7000)" stroke-width="1.286"/></g>
<g fill="none" stroke="#5a5f68" stroke-linecap="round" stroke-linejoin="round"><path d="M577.94,268.80 Q576.40,272.30 577.94,275.80" stroke-width="0.700"/><path d="M1,0.5 L2,1.8 M0.5,4 L2,4 L2,8 L0.5,9.5 M1.5,8.5 Q4,9.8 9.8,9.8 M3.5,7.5 L3.5,0.5 L9.5,0.5 L9.5,7.5 M5,2 L8,2 M6.5,1 L6.5,3.5 M4.8,3.5 L8.2,3.5 M5,4.8 L8,4.8 L8,6.8 L5,6.8 Z" transform="translate(578.04,268.80) scale(0.7000)" stroke-width="1.000"/><path d="M0.8,10 L0.8,0.8 L4,0.8 L4,4 L0.8,4 M0.8,2.4 L4,2.4 M9.2,10 L9.2,0.8 L6,0.8 L6,4 L9.2,4 M6,2.4 L9.2,2.4 M3.3,5.5 L6.7,5.5 L6.7,9 L3.3,9 Z M3.3,7.2 L6.7,7.2" transform="translate(584.36,268.80) scale(0.7000)" stroke-width="1.000"/><path d="M591.46,268.80 Q593.00,272.30 591.46,275.80" stroke-width="0.700"/></g>
<text x="0" y="0" transform="translate(17.1,355.85) rotate(-90)" text-anchor="middle" class="yl">μSv/h</text>
<polyline points="1070.9,303.21 1077.12,307.02 1083.34,307.02 1089.56,303.21 1095.78,303.21" fill="none" stroke="#4877b3" stroke-width="2" stroke-linejoin="round"/>
<polyline points="1070.9,348.84 1077.12,348.84 1083.34,348.84 1089.56,348.84 1095.78,348.84" fill="none" stroke="#bb4d49" stroke-width="2" stroke-linejoin="round"/>
<polyline points="1070.9,375.46 1077.12,379.26 1083.34,379.26 1089.56,379.26 1095.78,379.26" fill="none" stroke="#93b256" stroke-width="2" stroke-linejoin="round"/>
<polyline points="1070.9,383.07 1077.12,383.07 1083.34,383.07 1089.56,379.26 1095.78,386.87" fill="none" stroke="#7c5f9d" stroke-width="2" stroke-linejoin="round"/>
<polyline points="1070.9,421.09 1077.12,424.89 1083.34,424.89 1089.56,424.89 1095.78,424.89" fill="none" stroke="#449eb6" stroke-width="2" stroke-linejoin="round"/>
<line x1="1107.2" y1="317.15" x2="1114.6" y2="317.15" stroke="#4877b3" stroke-width="1.8"/>
<g fill="none" stroke="#626262" stroke-linecap="round" stroke-linejoin="round"><path d="M1,1.5 L9,1.5 M5,0 L5,1.5 M3,2.8 L7,2.8 L7,4.3 L3,4.3 Z M1.2,10 L1.2,5.5 L8.8,5.5 L8.8,10 M3.5,7 L6.5,7 L6.5,9 L3.5,9 Z" transform="translate(1116.75,314.45) scale(0.5300)" stroke-width="1.038"/><path d="M1.5,0.5 L0.8,3 M1,2.5 L4.5,2.5 M0.3,5.2 L4.8,5.2 M2.7,2.5 L2.7,5.5 L0.5,9.5 M2.8,6 L4.5,9 M5.8,2.5 L9.3,2.5 L9.3,8.5 L5.8,8.5 Z" transform="translate(1121.94,314.45) scale(0.5300)" stroke-width="1.038"/><path d="M2,0.5 L8,0.5 L8,5 L2,5 Z M2,2 L8,2 M2,3.5 L8,3.5 M1,0.5 L1,6.3 L9,6.3 M5,6.3 L5,10 M3.5,7.5 L1,9.5 M6.5,7.5 L9,9.5" transform="translate(1127.13,314.45) scale(0.5300)" stroke-width="1.038"/><path d="M1133.85,314.45 Q1132.68,317.10 1133.85,319.75" stroke-width="0.550"/><path d="M1,1 L9,1 L9,9 L1,9 Z M3.8,1 Q3.8,5 2,6.5 M6,1 L6,5.5 Q6,6.5 8,6.5" transform="translate(1134.20,314.45) scale(0.5300)" stroke-width="1.038"/><path d="M0.5,1.5 L9.5,1.5 M4,1.5 L3.5,5 Q2.5,8.5 0.5,10 M3.7,4.5 L8.5,4.5 Q8.5,9 7.5,10 L6,9.5" transform="translate(1139.39,314.45) scale(0.5300)" stroke-width="1.038"/><path d="M0.5,4.5 L9.5,4.5 M5,0.3 L5,10" transform="translate(1144.58,314.45) scale(0.5300)" stroke-width="1.038"/><path d="M1150.24,314.45 Q1151.40,317.10 1150.24,319.75" stroke-width="0.550"/></g>
<line x1="1107.2" y1="325.95" x2="1114.6" y2="325.95" stroke="#bb4d49" stroke-width="1.8"/>
<g fill="none" stroke="#626262" stroke-linecap="round" stroke-linejoin="round"><path d="M1,1.5 L9,1.5 M5,0 L5,1.5 M3,2.8 L7,2.8 L7,4.3 L3,4.3 Z M1.2,10 L1.2,5.5 L8.8,5.5 L8.8,10 M3.5,7 L6.5,7 L6.5,9 L3.5,9 Z" transform="translate(1116.75,323.25) scale(0.5300)" stroke-width="1.038"/><path d="M1.5,0.5 L0.8,3 M1,2.5 L4.5,2.5 M0.3,5.2 L4.8,5.2 M2.7,2.5 L2.7,5.5 L0.5,9.5 M2.8,6 L4.5,9 M5.8,2.5 L9.3,2.5 L9.3,8.5 L5.8,8.5 Z" transform="translate(1121.94,323.25) scale(0.5300)" stroke-width="1.038"/><path d="M2,0.5 L8,0.5 L8,5 L2,5 Z M2,2 L8,2 M2,3.5 L8,3.5 M1,0.5 L1,6.3 L9,6.3 M5,6.3 L5,10 M3.5,7.5 L1,9.5 M6.5,7.5 L9,9.5" transform="translate(1127.13,323.25) scale(0.5300)" stroke-width="1.038"/><path d="M1133.85,323.25 Q1132.68,325.90 1133.85,328.55" stroke-width="0.550"/><path d="M5,0 L5,1.3 M1,3.5 L1,1.8 L9,1.8 L9,3.5 M0.5,6 L9.5,6 M4,3.5 Q3.5,6 2,9.5 Q6,8 8.5,10 M7,6 Q6.5,9 2,10" transform="translate(1134.20,323.25) scale(0.5300)" stroke-width="1.038"/><path d="M0.5,1.5 L9.5,1.5 M3,0.3 L3,2.8 M7,0.3 L7,2.8 M2,4 L8,4 M0.8,6 L9.2,6 M4.5,6 L2,9.5 L8,9 M6.5,7.5 L8.5,10" transform="translate(1139.39,323.25) scale(0.5300)" stroke-width="1.038"/><path d="M5,0 L5,1.5 M0.5,2 L9.5,2 M1.5,4 L1.5,8.5 M1.5,4 L8.5,4 L8.5,8 L7.5,8.5 M5,2 L5,10" transform="translate(1144.58,323.25) scale(0.5300)" stroke-width="1.038"/><path d="M1150.24,323.25 Q1151.40,325.90 1150.24,328.55" stroke-width="0.550"/></g>
<line x1="1107.2" y1="334.75" x2="1114.6" y2="334.75" stroke="#93b256" stroke-width="1.8"/>
<g fill="none" stroke="#626262" stroke-linecap="round" stroke-linejoin="round"><path d="M1,1.5 L9,1.5 M5,0 L5,1.5 M3,2.8 L7,2.8 L7,4.3 L3,4.3 Z M1.2,10 L1.2,5.5 L8.8,5.5 L8.8,10 M3.5,7 L6.5,7 L6.5,9 L3.5,9 Z" transform="translate(1116.75,332.05) scale(0.5300)" stroke-width="1.038"/><path d="M1.5,0.5 L0.8,3 M1,2.5 L4.5,2.5 M0.3,5.2 L4.8,5.2 M2.7,2.5 L2.7,5.5 L0.5,9.5 M2.8,6 L4.5,9 M5.8,2.5 L9.3,2.5 L9.3,8.5 L5.8,8.5 Z" transform="translate(1121.94,332.05) scale(0.5300)" stroke-width="1.038"/><path d="M2,0.5 L8,0.5 L8,5 L2,5 Z M2,2 L8,2 M2,3.5 L8,3.5 M1,0.5 L1,6.3 L9,6.3 M5,6.3 L5,10 M3.5,7.5 L1,9.5 M6.5,7.5 L9,9.5" transform="translate(1127.13,332.05) scale(0.5300)" stroke-width="1.038"/><path d="M1133.85,332.05 Q1132.68,334.70 1133.85,337.35" stroke-width="0.550"/><path d="M0.5,3 L4,3 M2.2,0.3 L2.2,10 M2.2,3.5 L0.3,8 M2.4,4 L4,6.5 M4.8,1.5 L9.5,1.5 M4.8,3.5 L9.5,3.5 M4.5,5.5 L9.8,5.5 M7,0.3 L7,7 M5,7.5 L9.5,7.5 L9,10 L8,9.8 M6,8.5 L6.8,9.5" transform="translate(1134.20,332.05) scale(0.5300)" stroke-width="1.038"/><path d="M1,1 L9.5,1 M1.8,1 L1.8,6 Q1.5,9 0.3,10 M5,1 L4.5,2.5 M3.5,2.5 L8.5,2.5 L8.5,6.5 L3.5,6.5 Z M3.5,4.5 L8.5,4.5 M6,6.5 L6,10 L5,9.6 M4,8 L3,9.5 M8,8 L9.3,9.5" transform="translate(1139.39,332.05) scale(0.5300)" stroke-width="1.038"/><path d="M0.8,1.5 L4,1.5 L4,8 L0.8,8 Z M0.8,4.8 L4,4.8 M2.4,1.5 L2.4,8 M5,2 L9.5,2 M7.8,2 L7.8,9.5 L6.8,9.2" transform="translate(1144.58,332.05) scale(0.5300)" stroke-width="1.038"/><path d="M1150.24,332.05 Q1151.40,334.70 1150.24,337.35" stroke-width="0.550"/></g>
<line x1="1107.2" y1="343.55" x2="1114.6" y2="343.55" stroke="#7c5f9d" stroke-width="1.8"/>
<g fill="none" stroke="#626262" stroke-linecap="round" stroke-linejoin="round"><path d="M1,1.5 L9,1.5 M5,0 L5,1.5 M3,2.8 L7,2.8 L7,4.3 L3,4.3 Z M1.2,10 L1.2,5.5 L8.8,5.5 L8.8,10 M3.5,7 L6.5,7 L6.5,9 L3.5,9 Z" transform="translate(1116.75,340.85) scale(0.5300)" stroke-width="1.038"/><path d="M1.5,0.5 L0.8,3 M1,2.5 L4.5,2.5 M0.3,5.2 L4.8,5.2 M2.7,2.5 L2.7,5.5 L0.5,9.5 M2.8,6 L4.5,9 M5.8,2.5 L9.3,2.5 L9.3,8.5 L5.8,8.5 Z" transform="translate(1121.94,340.85) scale(0.5300)" stroke-width="1.038"/><path d="M2,0.5 L8,0.5 L8,5 L2,5 Z M2,2 L8,2 M2,3.5 L8,3.5 M1,0.5 L1,6.3 L9,6.3 M5,6.3 L5,10 M3.5,7.5 L1,9.5 M6.5,7.5 L9,9.5" transform="translate(1127.13,340.85) scale(0.5300)" stroke-width="1.038"/><path d="M1133.85,340.85 Q1132.68,343.50 1133.85,346.15" stroke-width="0.550"/><path d="M0.5,2.5 L9.5,2.5 M5,0.3 L5,10 M4.7,3 L0.5,8.5 M5.3,3 L9.5,8.5 M2.8,7.5 L7.2,7.5" transform="translate(1134.20,340.85) scale(0.5300)" stroke-width="1.038"/><path d="M5,0.5 L5,9 M1,3 L1,9 L9,9 L9,3" transform="translate(1139.39,340.85) scale(0.5300)" stroke-width="1.038"/><path d="M0.8,1.5 L4,1.5 L4,8 L0.8,8 Z M0.8,4.8 L4,4.8 M2.4,1.5 L2.4,8 M5,2 L9.5,2 M7.8,2 L7.8,9.5 L6.8,9.2" transform="translate(1144.58,340.85) scale(0.5300)" stroke-width="1.038"/><path d="M1150.24,340.85 Q1151.40,343.50 1150.24,346.15" stroke-width="0.550"/></g>
<line x1="1107.2" y1="352.35" x2="1114.6" y2="352.35" stroke="#449eb6" stroke-width="1.8"/>
<g fill="none" stroke="#626262" stroke-linecap="round" stroke-linejoin="round"><path d="M1,1.5 L9,1.5 M5,0 L5,1.5 M3,2.8 L7,2.8 L7,4.3 L3,4.3 Z M1.2,10 L1.2,5.5 L8.8,5.5 L8.8,10 M3.5,7 L6.5,7 L6.5,9 L3.5,9 Z" transform="translate(1116.75,349.65) scale(0.5300)" stroke-width="1.038"/><path d="M1.5,0.5 L0.8,3 M1,2.5 L4.5,2.5 M0.3,5.2 L4.8,5.2 M2.7,2.5 L2.7,5.5 L0.5,9.5 M2.8,6 L4.5,9 M5.8,2.5 L9.3,2.5 L9.3,8.5 L5.8,8.5 Z" transform="translate(1121.94,349.65) scale(0.5300)" stroke-width="1.038"/><path d="M2,0.5 L8,0.5 L8,5 L2,5 Z M2,2 L8,2 M2,3.5 L8,3.5 M1,0.5 L1,6.3 L9,6.3 M5,6.3 L5,10 M3.5,7.5 L1,9.5 M6.5,7.5 L9,9.5" transform="translate(1127.13,349.65) scale(0.5300)" stroke-width="1.038"/><path d="M1133.85,349.65 Q1132.68,352.30 1133.85,354.95" stroke-width="0.550"/><path d="M1,1.5 L9,1.5 M5,0 L5,1.5 M3,2.8 L7,2.8 L7,4.3 L3,4.3 Z M1.2,10 L1.2,5.5 L8.8,5.5 L8.8,10 M3.5,7 L6.5,7 L6.5,9 L3.5,9 Z" transform="translate(1134.20,349.65) scale(0.5300)" stroke-width="1.038"/><path d="M1.5,0.5 L0.8,3 M1,2.5 L4.5,2.5 M0.3,5.2 L4.8,5.2 M2.7,2.5 L2.7,5.5 L0.5,9.5 M2.8,6 L4.5,9 M5.8,2.5 L9.3,2.5 L9.3,8.5 L5.8,8.5 Z" transform="translate(1139.39,349.65) scale(0.5300)" stroke-width="1.038"/><path d="M5,0 L5,1.5 M0.5,2 L9.5,2 M1.5,4 L1.5,8.5 M1.5,4 L8.5,4 L8.5,8 L7.5,8.5 M5,2 L5,10" transform="translate(1144.58,349.65) scale(0.5300)" stroke-width="1.038"/><path d="M1150.24,349.65 Q1151.40,352.30 1150.24,354.95" stroke-width="0.550"/></g>
<rect x="1132.1" y="267.9" width="10.6" height="8.7" rx="0.6" fill="#f1f1f1" stroke="#cbcbcb" stroke-width="0.9"/>
<rect x="1135.5" y="269.6" width="3.8" height="2" fill="#b9cde6"/><rect x="1134.3" y="271.5" width="6.2" height="2.7" rx="0.4" fill="#9fb0c8"/><rect x="1135.3" y="273.9" width="4.2" height="1.4" fill="#bcd3ec"/>
<rect x="1144.0" y="267.9" width="10.2" height="8.7" rx="0.6" fill="#f1f1f1" stroke="#cbcbcb" stroke-width="0.9"/>
<rect x="1148.5" y="269.7" width="1.3" height="2.6" fill="#9ab46a"/><path d="M1147,272.1 L1151.3,272.1 L1149.15,274.1 Z" fill="#8fae5a"/><rect x="1146.1" y="274.2" width="6.1" height="1.1" fill="#9ab46a"/>
<rect x="3.3" y="443.25" width="1179" height="1.35" fill="#a2a2a2"/>
<rect x="4.9" y="449.09999999999997" width="1177.4" height="175.6" fill="#fff" stroke="#e6e6e6" stroke-width="1"/>
<rect x="4.9" y="449.4" width="1153.3999999999999" height="175.0" rx="0.8" fill="#fff" stroke="#a9bcd5" stroke-width="1.5"/>
<line x1="36.3" y1="612.24" x2="1099" y2="612.24" stroke="#efefef" stroke-width="1"/>
<line x1="36.3" y1="606.18" x2="1099" y2="606.18" stroke="#efefef" stroke-width="1"/>
<line x1="36.3" y1="600.12" x2="1099" y2="600.12" stroke="#efefef" stroke-width="1"/>
<line x1="36.3" y1="594.06" x2="1099" y2="594.06" stroke="#efefef" stroke-width="1"/>
<line x1="36.3" y1="581.94" x2="1099" y2="581.94" stroke="#efefef" stroke-width="1"/>
<line x1="36.3" y1="575.88" x2="1099" y2="575.88" stroke="#efefef" stroke-width="1"/>
<line x1="36.3" y1="569.82" x2="1099" y2="569.82" stroke="#efefef" stroke-width="1"/>
<line x1="36.3" y1="563.76" x2="1099" y2="563.76" stroke="#efefef" stroke-width="1"/>
<line x1="36.3" y1="551.64" x2="1099" y2="551.64" stroke="#efefef" stroke-width="1"/>
<line x1="36.3" y1="545.58" x2="1099" y2="545.58" stroke="#efefef" stroke-width="1"/>
<line x1="36.3" y1="539.52" x2="1099" y2="539.52" stroke="#efefef" stroke-width="1"/>
<line x1="36.3" y1="533.46" x2="1099" y2="533.46" stroke="#efefef" stroke-width="1"/>
<line x1="36.3" y1="521.34" x2="1099" y2="521.34" stroke="#efefef" stroke-width="1"/>
<line x1="36.3" y1="515.28" x2="1099" y2="515.28" stroke="#efefef" stroke-width="1"/>
<line x1="36.3" y1="509.22" x2="1099" y2="509.22" stroke="#efefef" stroke-width="1"/>
<line x1="36.3" y1="503.16" x2="1099" y2="503.16" stroke="#efefef" stroke-width="1"/>
<line x1="36.3" y1="491.04" x2="1099" y2="491.04" stroke="#efefef" stroke-width="1"/>
<line x1="36.3" y1="484.98" x2="1099" y2="484.98" stroke="#efefef" stroke-width="1"/>
<line x1="36.3" y1="478.92" x2="1099" y2="478.92" stroke="#efefef" stroke-width="1"/>
<line x1="36.3" y1="472.86" x2="1099" y2="472.86" stroke="#efefef" stroke-width="1"/>
<line x1="42.4" y1="466.8" x2="42.4" y2="618.3" stroke="#e4e4e4" stroke-width="1"/>
<line x1="77.82" y1="466.8" x2="77.82" y2="618.3" stroke="#e4e4e4" stroke-width="1"/>
<line x1="113.24" y1="466.8" x2="113.24" y2="618.3" stroke="#e4e4e4" stroke-width="1"/>
<line x1="148.66" y1="466.8" x2="148.66" y2="618.3" stroke="#e4e4e4" stroke-width="1"/>
<line x1="184.08" y1="466.8" x2="184.08" y2="618.3" stroke="#e4e4e4" stroke-width="1"/>
<line x1="219.5" y1="466.8" x2="219.5" y2="618.3" stroke="#e4e4e4" stroke-width="1"/>
<line x1="254.92" y1="466.8" x2="254.92" y2="618.3" stroke="#e4e4e4" stroke-width="1"/>
<line x1="290.34" y1="466.8" x2="290.34" y2="618.3" stroke="#e4e4e4" stroke-width="1"/>
<line x1="325.76" y1="466.8" x2="325.76" y2="618.3" stroke="#e4e4e4" stroke-width="1"/>
<line x1="361.18" y1="466.8" x2="361.18" y2="618.3" stroke="#e4e4e4" stroke-width="1"/>
<line x1="396.6" y1="466.8" x2="396.6" y2="618.3" stroke="#e4e4e4" stroke-width="1"/>
<line x1="432.02" y1="466.8" x2="432.02" y2="618.3" stroke="#e4e4e4" stroke-width="1"/>
<line x1="467.44" y1="466.8" x2="467.44" y2="618.3" stroke="#e4e4e4" stroke-width="1"/>
<line x1="502.86" y1="466.8" x2="502.86" y2="618.3" stroke="#e4e4e4" stroke-width="1"/>
<line x1="538.28" y1="466.8" x2="538.28" y2="618.3" stroke="#e4e4e4" stroke-width="1"/>
<line x1="573.7" y1="466.8" x2="573.7" y2="618.3" stroke="#e4e4e4" stroke-width="1"/>
<line x1="609.12" y1="466.8" x2="609.12" y2="618.3" stroke="#e4e4e4" stroke-width="1"/>
<line x1="644.54" y1="466.8" x2="644.54" y2="618.3" stroke="#e4e4e4" stroke-width="1"/>
<line x1="679.96" y1="466.8" x2="679.96" y2="618.3" stroke="#e4e4e4" stroke-width="1"/>
<line x1="715.38" y1="466.8" x2="715.38" y2="618.3" stroke="#e4e4e4" stroke-width="1"/>
<line x1="750.8" y1="466.8" x2="750.8" y2="618.3" stroke="#e4e4e4" stroke-width="1"/>
<line x1="786.22" y1="466.8" x2="786.22" y2="618.3" stroke="#e4e4e4" stroke-width="1"/>
<line x1="821.64" y1="466.8" x2="821.64" y2="618.3" stroke="#e4e4e4" stroke-width="1"/>
<line x1="857.06" y1="466.8" x2="857.06" y2="618.3" stroke="#e4e4e4" stroke-width="1"/>
<line x1="892.48" y1="466.8" x2="892.48" y2="618.3" stroke="#e4e4e4" stroke-width="1"/>
<line x1="927.9" y1="466.8" x2="927.9" y2="618.3" stroke="#e4e4e4" stroke-width="1"/>
<line x1="963.32" y1="466.8" x2="963.32" y2="618.3" stroke="#e4e4e4" stroke-width="1"/>
<line x1="998.74" y1="466.8" x2="998.74" y2="618.3" stroke="#e4e4e4" stroke-width="1"/>
<line x1="1034.16" y1="466.8" x2="1034.16" y2="618.3" stroke="#e4e4e4" stroke-width="1"/>
<line x1="1069.58" y1="466.8" x2="1069.58" y2="618.3" stroke="#e4e4e4" stroke-width="1"/>
<line x1="36.3" y1="618.3" x2="1099" y2="618.3" stroke="#d0d7e0" stroke-width="1.5"/>
<text x="33.4" y="620.5" text-anchor="end" class="tk">0.02</text>
<line x1="36.3" y1="588" x2="1099" y2="588" stroke="#d6d6d6" stroke-width="1.2"/>
<text x="33.4" y="590.2" text-anchor="end" class="tk">0.03</text>
<line x1="36.3" y1="557.7" x2="1099" y2="557.7" stroke="#d6d6d6" stroke-width="1.2"/>
<text x="33.4" y="559.9" text-anchor="end" class="tk">0.04</text>
<line x1="36.3" y1="527.4" x2="1099" y2="527.4" stroke="#d6d6d6" stroke-width="1.2"/>
<text x="33.4" y="529.6" text-anchor="end" class="tk">0.05</text>
<line x1="36.3" y1="497.1" x2="1099" y2="497.1" stroke="#d6d6d6" stroke-width="1.2"/>
<text x="33.4" y="499.3" text-anchor="end" class="tk">0.06</text>
<line x1="36.3" y1="466.8" x2="1099" y2="466.8" stroke="#d6d6d6" stroke-width="1.2"/>
<text x="33.4" y="469" text-anchor="end" class="tk">0.07</text>
<text x="42.8" y="624.6" text-anchor="middle" class="tk">12/7</text>
<text x="180.48" y="624.6" text-anchor="middle" class="tk">12/11</text>
<text x="322.16" y="624.6" text-anchor="middle" class="tk">12/15</text>
<text x="463.84" y="624.6" text-anchor="middle" class="tk">12/19</text>
<text x="605.52" y="624.6" text-anchor="middle" class="tk">12/23</text>
<text x="747.2" y="624.6" text-anchor="middle" class="tk">12/27</text>
<text x="888.88" y="624.6" text-anchor="middle" class="tk">12/31</text>
<text x="1030.56" y="624.6" text-anchor="middle" class="tk">1/4</text>
<g fill="none" stroke="#3a3f48" stroke-linecap="round" stroke-linejoin="round"><path d="M1,1.5 L9,1.5 M5,0 L5,1.5 M3,2.8 L7,2.8 L7,4.3 L3,4.3 Z M1.2,10 L1.2,5.5 L8.8,5.5 L8.8,10 M3.5,7 L6.5,7 L6.5,9 L3.5,9 Z" transform="translate(552.70,454.90) scale(0.7000)" stroke-width="1.286"/><path d="M1.5,0.5 L0.8,3 M1,2.5 L4.5,2.5 M0.3,5.2 L4.8,5.2 M2.7,2.5 L2.7,5.5 L0.5,9.5 M2.8,6 L4.5,9 M5.8,2.5 L9.3,2.5 L9.3,8.5 L5.8,8.5 Z" transform="translate(559.90,454.90) scale(0.7000)" stroke-width="1.286"/><path d="M2,0.5 L8,0.5 L8,5 L2,5 Z M2,2 L8,2 M2,3.5 L8,3.5 M1,0.5 L1,6.3 L9,6.3 M5,6.3 L5,10 M3.5,7.5 L1,9.5 M6.5,7.5 L9,9.5" transform="translate(567.10,454.90) scale(0.7000)" stroke-width="1.286"/></g>
<g fill="none" stroke="#5a5f68" stroke-linecap="round" stroke-linejoin="round"><path d="M577.94,454.90 Q576.40,458.40 577.94,461.90" stroke-width="0.700"/><path d="M2.5,0.8 L2.5,6 Q2.3,9 0.8,10 M2.5,0.8 L8.2,0.8 L8.2,9.5 L7,9.3 M2.5,3.6 L8.2,3.6 M2.5,6.4 L8.2,6.4" transform="translate(578.04,454.90) scale(0.7000)" stroke-width="1.000"/><path d="M0.8,10 L0.8,0.8 L4,0.8 L4,4 L0.8,4 M0.8,2.4 L4,2.4 M9.2,10 L9.2,0.8 L6,0.8 L6,4 L9.2,4 M6,2.4 L9.2,2.4 M3.3,5.5 L6.7,5.5 L6.7,9 L3.3,9 Z M3.3,7.2 L6.7,7.2" transform="translate(584.36,454.90) scale(0.7000)" stroke-width="1.000"/><path d="M591.46,454.90 Q593.00,458.40 591.46,461.90" stroke-width="0.700"/></g>
<text x="0" y="0" transform="translate(17.1,541.95) rotate(-90)" text-anchor="middle" class="yl">μSv/h</text>
<polyline points="39.6,509.22 45.48,512.25 51.36,509.22 57.24,503.16 63.12,500.13" fill="none" stroke="#4877b3" stroke-width="2" stroke-linejoin="round"/>
<polyline points="39.6,548.61 45.48,548.61 51.36,545.58 57.24,545.58 63.12,545.58" fill="none" stroke="#bb4d49" stroke-width="2" stroke-linejoin="round"/>
<polyline points="39.6,578.91 45.48,578.91 51.36,575.88 57.24,569.82 63.12,566.79" fill="none" stroke="#93b256" stroke-width="2" stroke-linejoin="round"/>
<polyline points="39.6,572.85 45.48,572.85 51.36,566.79 57.24,563.76 63.12,560.73" fill="none" stroke="#7c5f9d" stroke-width="2" stroke-linejoin="round"/>
<polyline points="39.6,612.24 45.48,609.21 51.36,606.18 57.24,603.15 63.12,603.15" fill="none" stroke="#449eb6" stroke-width="2" stroke-linejoin="round"/>
<line x1="1107.2" y1="503.25" x2="1114.6" y2="503.25" stroke="#4877b3" stroke-width="1.8"/>
<g fill="none" stroke="#626262" stroke-linecap="round" stroke-linejoin="round"><path d="M1,1.5 L9,1.5 M5,0 L5,1.5 M3,2.8 L7,2.8 L7,4.3 L3,4.3 Z M1.2,10 L1.2,5.5 L8.8,5.5 L8.8,10 M3.5,7 L6.5,7 L6.5,9 L3.5,9 Z" transform="translate(1116.75,500.55) scale(0.5300)" stroke-width="1.038"/><path d="M1.5,0.5 L0.8,3 M1,2.5 L4.5,2.5 M0.3,5.2 L4.8,5.2 M2.7,2.5 L2.7,5.5 L0.5,9.5 M2.8,6 L4.5,9 M5.8,2.5 L9.3,2.5 L9.3,8.5 L5.8,8.5 Z" transform="translate(1121.94,500.55) scale(0.5300)" stroke-width="1.038"/><path d="M2,0.5 L8,0.5 L8,5 L2,5 Z M2,2 L8,2 M2,3.5 L8,3.5 M1,0.5 L1,6.3 L9,6.3 M5,6.3 L5,10 M3.5,7.5 L1,9.5 M6.5,7.5 L9,9.5" transform="translate(1127.13,500.55) scale(0.5300)" stroke-width="1.038"/><path d="M1133.85,500.55 Q1132.68,503.20 1133.85,505.85" stroke-width="0.550"/><path d="M1,1 L9,1 L9,9 L1,9 Z M3.8,1 Q3.8,5 2,6.5 M6,1 L6,5.5 Q6,6.5 8,6.5" transform="translate(1134.20,500.55) scale(0.5300)" stroke-width="1.038"/><path d="M0.5,1.5 L9.5,1.5 M4,1.5 L3.5,5 Q2.5,8.5 0.5,10 M3.7,4.5 L8.5,4.5 Q8.5,9 7.5,10 L6,9.5" transform="translate(1139.39,500.55) scale(0.5300)" stroke-width="1.038"/><path d="M0.5,4.5 L9.5,4.5 M5,0.3 L5,10" transform="translate(1144.58,500.55) scale(0.5300)" stroke-width="1.038"/><path d="M1150.24,500.55 Q1151.40,503.20 1150.24,505.85" stroke-width="0.550"/></g>
<line x1="1107.2" y1="512.05" x2="1114.6" y2="512.05" stroke="#bb4d49" stroke-width="1.8"/>
<g fill="none" stroke="#626262" stroke-linecap="round" stroke-linejoin="round"><path d="M1,1.5 L9,1.5 M5,0 L5,1.5 M3,2.8 L7,2.8 L7,4.3 L3,4.3 Z M1.2,10 L1.2,5.5 L8.8,5.5 L8.8,10 M3.5,7 L6.5,7 L6.5,9 L3.5,9 Z" transform="translate(1116.75,509.35) scale(0.5300)" stroke-width="1.038"/><path d="M1.5,0.5 L0.8,3 M1,2.5 L4.5,2.5 M0.3,5.2 L4.8,5.2 M2.7,2.5 L2.7,5.5 L0.5,9.5 M2.8,6 L4.5,9 M5.8,2.5 L9.3,2.5 L9.3,8.5 L5.8,8.5 Z" transform="translate(1121.94,509.35) scale(0.5300)" stroke-width="1.038"/><path d="M2,0.5 L8,0.5 L8,5 L2,5 Z M2,2 L8,2 M2,3.5 L8,3.5 M1,0.5 L1,6.3 L9,6.3 M5,6.3 L5,10 M3.5,7.5 L1,9.5 M6.5,7.5 L9,9.5" transform="translate(1127.13,509.35) scale(0.5300)" stroke-width="1.038"/><path d="M1133.85,509.35 Q1132.68,512.00 1133.85,514.65" stroke-width="0.550"/><path d="M5,0 L5,1.3 M1,3.5 L1,1.8 L9,1.8 L9,3.5 M0.5,6 L9.5,6 M4,3.5 Q3.5,6 2,9.5 Q6,8 8.5,10 M7,6 Q6.5,9 2,10" transform="translate(1134.20,509.35) scale(0.5300)" stroke-width="1.038"/><path d="M0.5,1.5 L9.5,1.5 M3,0.3 L3,2.8 M7,0.3 L7,2.8 M2,4 L8,4 M0.8,6 L9.2,6 M4.5,6 L2,9.5 L8,9 M6.5,7.5 L8.5,10" transform="translate(1139.39,509.35) scale(0.5300)" stroke-width="1.038"/><path d="M5,0 L5,1.5 M0.5,2 L9.5,2 M1.5,4 L1.5,8.5 M1.5,4 L8.5,4 L8.5,8 L7.5,8.5 M5,2 L5,10" transform="translate(1144.58,509.35) scale(0.5300)" stroke-width="1.038"/><path d="M1150.24,509.35 Q1151.40,512.00 1150.24,514.65" stroke-width="0.550"/></g>
<line x1="1107.2" y1="520.85" x2="1114.6" y2="520.85" stroke="#93b256" stroke-width="1.8"/>
<g fill="none" stroke="#626262" stroke-linecap="round" stroke-linejoin="round"><path d="M1,1.5 L9,1.5 M5,0 L5,1.5 M3,2.8 L7,2.8 L7,4.3 L3,4.3 Z M1.2,10 L1.2,5.5 L8.8,5.5 L8.8,10 M3.5,7 L6.5,7 L6.5,9 L3.5,9 Z" transform="translate(1116.75,518.15) scale(0.5300)" stroke-width="1.038"/><path d="M1.5,0.5 L0.8,3 M1,2.5 L4.5,2.5 M0.3,5.2 L4.8,5.2 M2.7,2.5 L2.7,5.5 L0.5,9.5 M2.8,6 L4.5,9 M5.8,2.5 L9.3,2.5 L9.3,8.5 L5.8,8.5 Z" transform="translate(1121.94,518.15) scale(0.5300)" stroke-width="1.038"/><path d="M2,0.5 L8,0.5 L8,5 L2,5 Z M2,2 L8,2 M2,3.5 L8,3.5 M1,0.5 L1,6.3 L9,6.3 M5,6.3 L5,10 M3.5,7.5 L1,9.5 M6.5,7.5 L9,9.5" transform="translate(1127.13,518.15) scale(0.5300)" stroke-width="1.038"/><path d="M1133.85,518.15 Q1132.68,520.80 1133.85,523.45" stroke-width="0.550"/><path d="M0.5,3 L4,3 M2.2,0.3 L2.2,10 M2.2,3.5 L0.3,8 M2.4,4 L4,6.5 M4.8,1.5 L9.5,1.5 M4.8,3.5 L9.5,3.5 M4.5,5.5 L9.8,5.5 M7,0.3 L7,7 M5,7.5 L9.5,7.5 L9,10 L8,9.8 M6,8.5 L6.8,9.5" transform="translate(1134.20,518.15) scale(0.5300)" stroke-width="1.038"/><path d="M1,1 L9.5,1 M1.8,1 L1.8,6 Q1.5,9 0.3,10 M5,1 L4.5,2.5 M3.5,2.5 L8.5,2.5 L8.5,6.5 L3.5,6.5 Z M3.5,4.5 L8.5,4.5 M6,6.5 L6,10 L5,9.6 M4,8 L3,9.5 M8,8 L9.3,9.5" transform="translate(1139.39,518.15) scale(0.5300)" stroke-width="1.038"/><path d="M0.8,1.5 L4,1.5 L4,8 L0.8,8 Z M0.8,4.8 L4,4.8 M2.4,1.5 L2.4,8 M5,2 L9.5,2 M7.8,2 L7.8,9.5 L6.8,9.2" transform="translate(1144.58,518.15) scale(0.5300)" stroke-width="1.038"/><path d="M1150.24,518.15 Q1151.40,520.80 1150.24,523.45" stroke-width="0.550"/></g>
<line x1="1107.2" y1="529.65" x2="1114.6" y2="529.65" stroke="#7c5f9d" stroke-width="1.8"/>
<g fill="none" stroke="#626262" stroke-linecap="round" stroke-linejoin="round"><path d="M1,1.5 L9,1.5 M5,0 L5,1.5 M3,2.8 L7,2.8 L7,4.3 L3,4.3 Z M1.2,10 L1.2,5.5 L8.8,5.5 L8.8,10 M3.5,7 L6.5,7 L6.5,9 L3.5,9 Z" transform="translate(1116.75,526.95) scale(0.5300)" stroke-width="1.038"/><path d="M1.5,0.5 L0.8,3 M1,2.5 L4.5,2.5 M0.3,5.2 L4.8,5.2 M2.7,2.5 L2.7,5.5 L0.5,9.5 M2.8,6 L4.5,9 M5.8,2.5 L9.3,2.5 L9.3,8.5 L5.8,8.5 Z" transform="translate(1121.94,526.95) scale(0.5300)" stroke-width="1.038"/><path d="M2,0.5 L8,0.5 L8,5 L2,5 Z M2,2 L8,2 M2,3.5 L8,3.5 M1,0.5 L1,6.3 L9,6.3 M5,6.3 L5,10 M3.5,7.5 L1,9.5 M6.5,7.5 L9,9.5" transform="translate(1127.13,526.95) scale(0.5300)" stroke-width="1.038"/><path d="M1133.85,526.95 Q1132.68,529.60 1133.85,532.25" stroke-width="0.550"/><path d="M0.5,2.5 L9.5,2.5 M5,0.3 L5,10 M4.7,3 L0.5,8.5 M5.3,3 L9.5,8.5 M2.8,7.5 L7.2,7.5" transform="translate(1134.20,526.95) scale(0.5300)" stroke-width="1.038"/><path d="M5,0.5 L5,9 M1,3 L1,9 L9,9 L9,3" transform="translate(1139.39,526.95) scale(0.5300)" stroke-width="1.038"/><path d="M0.8,1.5 L4,1.5 L4,8 L0.8,8 Z M0.8,4.8 L4,4.8 M2.4,1.5 L2.4,8 M5,2 L9.5,2 M7.8,2 L7.8,9.5 L6.8,9.2" transform="translate(1144.58,526.95) scale(0.5300)" stroke-width="1.038"/><path d="M1150.24,526.95 Q1151.40,529.60 1150.24,532.25" stroke-width="0.550"/></g>
<line x1="1107.2" y1="538.45" x2="1114.6" y2="538.45" stroke="#449eb6" stroke-width="1.8"/>
<g fill="none" stroke="#626262" stroke-linecap="round" stroke-linejoin="round"><path d="M1,1.5 L9,1.5 M5,0 L5,1.5 M3,2.8 L7,2.8 L7,4.3 L3,4.3 Z M1.2,10 L1.2,5.5 L8.8,5.5 L8.8,10 M3.5,7 L6.5,7 L6.5,9 L3.5,9 Z" transform="translate(1116.75,535.75) scale(0.5300)" stroke-width="1.038"/><path d="M1.5,0.5 L0.8,3 M1,2.5 L4.5,2.5 M0.3,5.2 L4.8,5.2 M2.7,2.5 L2.7,5.5 L0.5,9.5 M2.8,6 L4.5,9 M5.8,2.5 L9.3,2.5 L9.3,8.5 L5.8,8.5 Z" transform="translate(1121.94,535.75) scale(0.5300)" stroke-width="1.038"/><path d="M2,0.5 L8,0.5 L8,5 L2,5 Z M2,2 L8,2 M2,3.5 L8,3.5 M1,0.5 L1,6.3 L9,6.3 M5,6.3 L5,10 M3.5,7.5 L1,9.5 M6.5,7.5 L9,9.5" transform="translate(1127.13,535.75) scale(0.5300)" stroke-width="1.038"/><path d="M1133.85,535.75 Q1132.68,538.40 1133.85,541.05" stroke-width="0.550"/><path d="M1,1.5 L9,1.5 M5,0 L5,1.5 M3,2.8 L7,2.8 L7,4.3 L3,4.3 Z M1.2,10 L1.2,5.5 L8.8,5.5 L8.8,10 M3.5,7 L6.5,7 L6.5,9 L3.5,9 Z" transform="translate(1134.20,535.75) scale(0.5300)" stroke-width="1.038"/><path d="M1.5,0.5 L0.8,3 M1,2.5 L4.5,2.5 M0.3,5.2 L4.8,5.2 M2.7,2.5 L2.7,5.5 L0.5,9.5 M2.8,6 L4.5,9 M5.8,2.5 L9.3,2.5 L9.3,8.5 L5.8,8.5 Z" transform="translate(1139.39,535.75) scale(0.5300)" stroke-width="1.038"/><path d="M5,0 L5,1.5 M0.5,2 L9.5,2 M1.5,4 L1.5,8.5 M1.5,4 L8.5,4 L8.5,8 L7.5,8.5 M5,2 L5,10" transform="translate(1144.58,535.75) scale(0.5300)" stroke-width="1.038"/><path d="M1150.24,535.75 Q1151.40,538.40 1150.24,541.05" stroke-width="0.550"/></g>
<rect x="1132.1" y="454" width="10.6" height="8.7" rx="0.6" fill="#f1f1f1" stroke="#cbcbcb" stroke-width="0.9"/>
<rect x="1135.5" y="455.7" width="3.8" height="2" fill="#b9cde6"/><rect x="1134.3" y="457.6" width="6.2" height="2.7" rx="0.4" fill="#9fb0c8"/><rect x="1135.3" y="460" width="4.2" height="1.4" fill="#bcd3ec"/>
<rect x="1144.0" y="454" width="10.2" height="8.7" rx="0.6" fill="#f1f1f1" stroke="#cbcbcb" stroke-width="0.9"/>
<rect x="1148.5" y="455.8" width="1.3" height="2.6" fill="#9ab46a"/><path d="M1147,458.2 L1151.3,458.2 L1149.15,460.2 Z" fill="#8fae5a"/><rect x="1146.1" y="460.3" width="6.1" height="1.1" fill="#9ab46a"/>
<rect x="3.3" y="629.25" width="1179" height="1.35" fill="#a2a2a2"/>
<rect x="1186.5" y="76" width="13.5" height="557" fill="#fbfbfb"/>
<rect x="1189.4" y="205" width="7.8" height="225" rx="3.9" fill="#8b8b8b"/>
<path d="M1193.3,81 L1197.3,86.9 L1189.3,86.9 Z" fill="#8b8b8b" stroke="#8b8b8b" stroke-width="0.8" stroke-linejoin="round"/>
<path d="M1193.3,628.9 L1197.3,623 L1189.3,623 Z" fill="#8b8b8b" stroke="#8b8b8b" stroke-width="0.8" stroke-linejoin="round"/>
<path d="M580,633 L580,623 Q580,619.5 583.5,619.5 L601.5,619.5 Q605,619.5 605,623 L605,633 Z" fill="#f7f7f7" stroke="#dcdcdc" stroke-width="0.6"/>
<path d="M589.5,627.6 L592.6,624.5 L595.7,627.6" stroke="#444" stroke-width="1.1" fill="none" stroke-linecap="round" stroke-linejoin="round"/>
</svg>
</div>
<div id="taskbar" class="abs"><svg width="1200" height="42" viewBox="0 633 1200 42" style="position:absolute;left:0;top:0">
<rect x="0" y="633" width="1200" height="42" fill="#cfe5ec"/><rect x="0" y="633" width="1200" height="0.8" fill="#bcd2d9"/>
<defs><linearGradient id="wlg" x1="0" y1="0" x2="1" y2="1"><stop offset="0" stop-color="#4ccbf7"/><stop offset="1" stop-color="#0a64d2"/></linearGradient></defs>
<path fill="url(#wlg)" d="M434.1,645.4 Q434.1,644.2 435.3,644.2 L443.1,644.2 L443.1,653.9 L434.1,653.9 Z M445,644.2 L452.9,644.2 Q454.1,644.2 454.1,645.4 L454.1,653.9 L445,653.9 Z M434.1,655.1 L443.1,655.1 L443.1,664.3 L435.3,664.3 Q434.1,664.3 434.1,663.1 Z M445,655.1 L454.1,655.1 L454.1,663.1 Q454.1,664.3 452.9,664.3 L445,664.3 Z"/>
<rect x="466.5" y="640.7" width="191.6" height="26.4" rx="13.2" fill="#edf5f8" stroke="#c6d9df" stroke-width="0.8"/>
<g stroke="#1c1c1c" stroke-width="1.6" fill="none" stroke-linecap="round"><circle cx="481" cy="652.2" r="5"/><path d="M484.6,656 L488.3,659.8"/></g>
<g fill="none" stroke="#4a4a4a" stroke-linecap="round" stroke-linejoin="round"><path d="M0.4,2.9 L3.4,2.9 M1.9,0.4 L1.9,10 M1.9,3.3 L0.3,7.1 M2.1,3.8 L3.3,5.8 M6.7,0.4 L4,3.3 M6.7,0.4 L9.8,3.3 M5,3.8 L8.3,3.8 M4.6,4.8 L8.8,4.8 L8.8,6.8 L4.6,6.8 Z M6.7,4.8 L6.7,7.9 M6.5,7.7 Q5.8,9.6 4,10 M6.9,7.7 Q7.9,9.6 9.8,10" transform="translate(498.55,647.40) scale(1.1600)" stroke-width="0.862"/><path d="M1,1.2 L9,1.2 M5,0.2 L5,2.9 M0.6,4.2 L0.6,2.9 L9.4,2.9 L9.4,4.2 M5,3.7 L3,5.8 L6.8,5.8 L2.6,7.9 L7.5,7.6 M6.6,7 L7.8,8.3 M5,7.7 L5,10 M3,8.7 L1.3,10 M7,8.7 L8.7,10" transform="translate(510.85,647.40) scale(1.1600)" stroke-width="0.862"/></g>
<path d="M613,654.4 L621.5,648.6 Q623,647.6 624.5,648.4 L632.5,653.2 Q634.3,654.6 633.3,656.2 L621.5,661 Q620.3,661.4 619.5,660.6 Z" fill="#58b2da"/><path d="M622.8,649 L632,654.6" stroke="#92d2ee" stroke-width="1.4" stroke-linecap="round"/><path d="M619.8,660.4 L632.8,655.8" stroke="#3d94c0" stroke-width="0.8"/>
<circle cx="638.9" cy="652.3" r="2.7" fill="#26a65a"/><circle cx="650.2" cy="651.2" r="2.7" fill="#3aa64c"/><circle cx="645.2" cy="649.6" r="2.2" fill="#62aa3e"/><path d="M643,650 L645.5,653.5 L642.5,653.8 Z" fill="#f07a28"/><circle cx="650.3" cy="654.6" r="1.6" fill="#f0c020"/><circle cx="642.8" cy="655.4" r="1.9" fill="#e0462c"/><circle cx="646.8" cy="655.4" r="1.6" fill="#ec6a3a"/>
<path d="M637.2,655.8 L652.7,655.8 Q652,661.7 645,661.7 Q638,661.7 637.2,655.8 Z" fill="#c98462"/>
<path d="M669.2,645.5 Q669.2,644.2 670.5,644.2 L676.2,644.2 L678.2,646.4 L689.2,646.4 Q690.6,646.4 690.6,647.8 L690.6,662 Q690.6,663.3 689.2,663.3 L670.6,663.3 Q669.2,663.3 669.2,662 Z" fill="#fcc93e"/><path d="M669.2,645.5 Q669.2,644.2 670.5,644.2 L676.2,644.2 L678.2,646.4 L676.2,648.6 L669.2,648.6 Z" fill="#e5a114"/><rect x="673.2" y="657.2" width="13.2" height="6.1" rx="1.3" fill="#1b82d8"/>
<rect x="711" y="643.8" width="15.6" height="17.4" rx="1.3" fill="#5cc0e8"/><rect x="711" y="661.2" width="15.6" height="1.4" fill="#f4f4f4"/><rect x="711" y="662.6" width="15.6" height="1.8" rx="0.6" fill="#9a3810"/><g stroke="#0f6a90" stroke-width="1.25"><path d="M713.8,649.5 L723.8,649.5 M713.8,653 L723.8,653 M713.8,656.5 L723.8,656.5"/></g><g fill="#14607e"><rect x="712.8" y="642.6" width="1.4" height="2.6" rx="0.6"/><rect x="716.5" y="642.6" width="1.4" height="2.6" rx="0.6"/><rect x="720.2" y="642.6" width="1.4" height="2.6" rx="0.6"/><rect x="723.8" y="642.6" width="1.4" height="2.6" rx="0.6"/></g>
<rect x="743.5" y="637.3" width="30.2" height="33.5" rx="4" fill="#e6f2f6" stroke="#d2e2e8" stroke-width="0.6"/>
<rect x="741" y="637.2" width="29.4" height="33.6" rx="4" fill="#eaf4f7" stroke="#cfe0e6" stroke-width="0.6"/>
<path d="M748.02,648.60 A10.6,10.6 0 0 1 766.38,648.60 L757.20,648.60 A5.3,5.3 0 0 0 752.61,656.55 Z" fill="#e94235"/>
<path d="M766.38,648.60 A10.6,10.6 0 0 1 757.20,664.50 L761.79,656.55 A5.3,5.3 0 0 0 757.20,648.60 Z" fill="#fbbc04"/>
<path d="M757.20,664.50 A10.6,10.6 0 0 1 748.02,648.60 L752.61,656.55 A5.3,5.3 0 0 0 761.79,656.55 Z" fill="#34a853"/>
<circle cx="757.2" cy="653.9" r="5.3" fill="#fff"/><circle cx="757.2" cy="653.9" r="4.25" fill="#1a73e8"/>
<rect x="750.5" y="668" width="14" height="2.6" rx="1.3" fill="#1c7f98"/>
<path d="M1005.5,655.5 L1009.5,651.5 L1013.5,655.5" stroke="#1c1c1c" stroke-width="1.2" fill="none" stroke-linecap="round" stroke-linejoin="round"/>
<g fill="none" stroke="#1c1c1c" stroke-linecap="round" stroke-linejoin="round"><path d="M1.2,2.1 Q4,2.3 7.3,1.4 M3.7,0.2 Q3.5,4.6 5.2,9.2 M6.8,3.7 Q5.8,7.3 3.1,8.8 Q0.8,9.8 0.8,7.9 Q0.9,5.2 5.4,4.8 Q9.6,4.6 9.5,7.3 Q9.2,9.5 6.5,10" transform="translate(1030.60,647.00) scale(1.3000)" stroke-width="0.885"/></g>
<g stroke="#1c1c1c" stroke-width="1.1" fill="none"><rect x="1058.5" y="647.5" width="10.5" height="10" rx="0.5"/><path d="M1063,657.5 L1063,660.5 M1060,660.5 L1066,660.5 M1071.2,651 L1071.2,660.5"/><rect x="1069.7" y="646.5" width="3" height="4" rx="1.4"/></g>
<g stroke="#1c1c1c" stroke-width="1.05" fill="none" stroke-linejoin="round"><path d="M1079.6,651.6 L1081.8,651.6 L1084.8,649 L1084.8,658.3 L1081.8,655.7 L1079.6,655.7 Z"/><path d="M1087,651.4 Q1088.4,653.65 1087,655.9"/></g><path d="M1089.6,649.6 Q1092.4,653.65 1089.6,657.7" stroke="#8a9a9e" stroke-width="0.9" fill="none"/>
<g stroke="#1c1c1c" stroke-width="1.1" fill="none"><rect x="1100.5" y="649.5" width="13" height="8" rx="1.5"/></g><rect x="1114" y="652" width="1.6" height="3" fill="#1c1c1c"/><path d="M1103,650 L1101.5,654 L1104,654 L1102.5,657.5 L1106,653 L1103.5,653 L1104.5,650Z" fill="#1c1c1c"/>
<text x="1183" y="651" text-anchor="end" font-size="10.8" fill="#1c1c1c" font-family="Liberation Sans">14:45</text>
<text x="1183" y="665.2" text-anchor="end" font-size="10.7" fill="#2a2a2a" font-family="Liberation Sans">2026/01/06</text>
</svg></div>
</body>
</html>
